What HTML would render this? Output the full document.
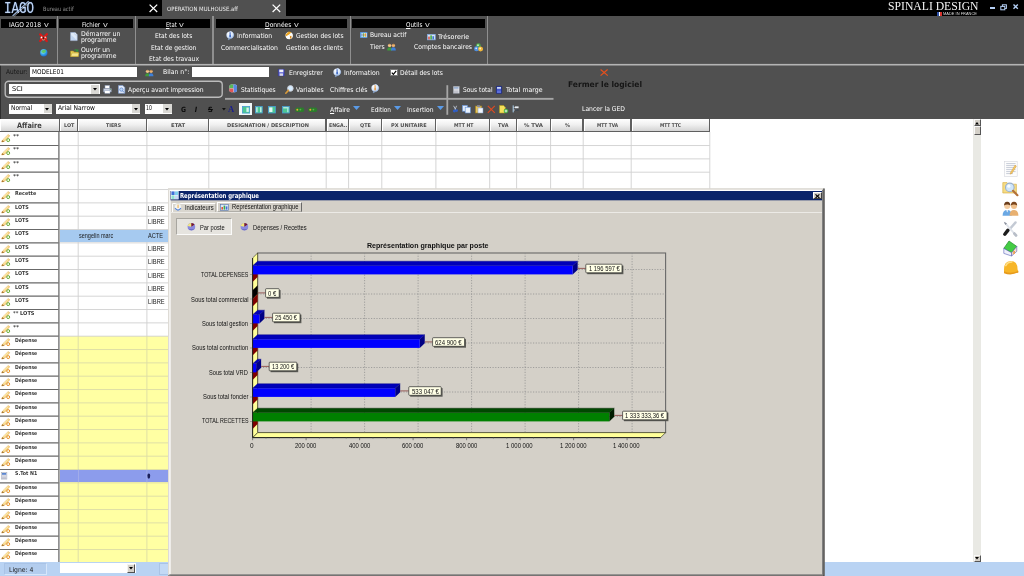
<!DOCTYPE html>
<html lang="fr"><head><meta charset="utf-8"><title>IAGO - OPERATION MULHOUSE.aff</title>
<style>
html,body{margin:0;padding:0;}
body{width:1024px;height:576px;overflow:hidden;background:#fff;position:relative;}
#app{left:0;top:0;width:1024px;height:576px;overflow:hidden;will-change:transform;}
body div,body span.t,body svg{position:absolute;box-sizing:border-box;}
span.t{white-space:nowrap;}
svg{overflow:visible;}
u{text-decoration:underline;}
</style></head>
<body>
<div id="app">
<div style="left:0px;top:0px;width:1024px;height:16px;background:#000;"></div>
<div style="left:0px;top:16px;width:1024px;height:103px;background:#505050;"></div>
<div style="left:0px;top:65.4px;width:1.3px;height:53.4px;background:#2e2e2e;"></div>
<div style="left:162px;top:0px;width:123.5px;height:16.5px;background:#505050;"></div>
<span class="t" style="left:4.20px;top:-2.00px;font:16.2px/22.68px 'Liberation Mono',monospace;color:#c4d6f2;transform-origin:0 50%;transform:scaleX(0.7720);text-shadow:0 0 1.2px #4f83c8;">IAGO</span>
<svg style="left:10px;top:0px;" width="22" height="17" viewBox="0 0 22 17"><path d="M2.6 15.8 L18.6 1.2" stroke="#a9c6ee" stroke-width="1.1" fill="none"/><path d="M4.2 16.2 L19.6 2.2" stroke="#e8f0fb" stroke-width="0.6" fill="none"/></svg>
<span class="t" style="left:43.00px;top:5.00px;font:5.9px/8.26px 'DejaVu Sans Condensed','DejaVu Sans','Liberation Sans',sans-serif;color:#8c8c8c;transform-origin:0 50%;transform:scaleX(0.9574);">Bureau actif</span>
<svg style="left:148.6px;top:3.8px;" width="9" height="9" viewBox="0 0 9 9"><path d="M0.6 0.6 L8.2 8.0 M8.2 0.6 L0.6 8.0" stroke="#fff" stroke-width="1.25" fill="none"/></svg>
<span class="t" style="left:167.00px;top:5.00px;font:5.9px/8.26px 'DejaVu Sans Condensed','DejaVu Sans','Liberation Sans',sans-serif;color:#ececec;transform-origin:0 50%;transform:scaleX(1.0044);">OPERATION MULHOUSE.aff</span>
<svg style="left:271.6px;top:3.8px;" width="9" height="9" viewBox="0 0 9 9"><path d="M0.6 0.6 L8.2 8.0 M8.2 0.6 L0.6 8.0" stroke="#fff" stroke-width="1.25" fill="none"/></svg>
<span class="t" style="left:888.00px;top:-2.00px;font:12.7px/17.78px 'Liberation Serif',serif;color:#f4f4f4;transform-origin:0 50%;transform:scaleX(0.9204);">SPINALI DESIGN</span>
<div style="left:936.8px;top:12px;width:5px;height:3.6px;background:linear-gradient(90deg,#2b4fa8 0 33%,#fff 33% 66%,#d8322c 66% 100%);"></div>
<span class="t" style="left:943.00px;top:11.00px;font:4.4px/6.16px 'Liberation Sans',sans-serif;color:#dcdcdc;transform-origin:0 50%;transform:scaleX(0.9048);">MADE IN FRANCE</span>
<div style="left:990px;top:7.4px;width:5.2px;height:1.8px;background:#b5d0f5;"></div>
<svg style="left:1000px;top:4px;" width="8" height="7" viewBox="0 0 8 7"><rect x="2.4" y="0.8" width="4" height="3.6" fill="none" stroke="#b5d0f5" stroke-width="1"/><rect x="0.8" y="2.4" width="4" height="3.4" fill="#000" stroke="#b5d0f5" stroke-width="1"/></svg>
<svg style="left:1013px;top:4.4px;" width="6" height="6" viewBox="0 0 6 6"><path d="M0.5 0.5 L4.8 4.8 M4.8 0.5 L0.5 4.8" stroke="#b5d0f5" stroke-width="1.4" fill="none"/></svg>
<div style="left:56.7px;top:16px;width:1.4px;height:48.5px;background:#8f8f8f;"></div>
<div style="left:134.7px;top:16px;width:1.4px;height:48.5px;background:#8f8f8f;"></div>
<div style="left:212.4px;top:16px;width:1.4px;height:48.5px;background:#8f8f8f;"></div>
<div style="left:349.8px;top:16px;width:1.4px;height:48.5px;background:#8f8f8f;"></div>
<div style="left:486.7px;top:16px;width:1.4px;height:48.5px;background:#8f8f8f;"></div>
<svg style="left:0px;top:63px;" width="1024" height="3" viewBox="0 0 1024 3"><rect x="0" y="0.9" width="1024" height="1.6" fill="#b4b4b4"/></svg>
<div style="left:1px;top:19px;width:55.2px;height:8.8px;background:#000;"></div>
<span class="t" style="left:9.40px;top:21.00px;font:6.67px/9.34px 'DejaVu Sans Condensed','DejaVu Sans','Liberation Sans',sans-serif;color:#fff;transform-origin:0 50%;transform:scaleX(0.9922);">IAGO 2018</span>
<span class="t" style="left:43.80px;top:20.00px;font:7.4px/10.36px 'Liberation Sans',sans-serif;color:#d4d4d4;transform-origin:0 50%;transform:scaleX(1.2962);">v</span>
<div style="left:59px;top:19px;width:74.2px;height:8.8px;background:#000;"></div>
<span class="t" style="left:82.00px;top:21.00px;font:6.67px/9.34px 'DejaVu Sans Condensed','DejaVu Sans','Liberation Sans',sans-serif;color:#fff;transform-origin:0 50%;transform:scaleX(0.9267);">Fichier</span>
<span class="t" style="left:102.50px;top:20.00px;font:7.4px/10.36px 'Liberation Sans',sans-serif;color:#d4d4d4;transform-origin:0 50%;transform:scaleX(1.2962);">v</span>
<div style="left:137.5px;top:19px;width:72.5px;height:8.8px;background:#000;"></div>
<span class="t" style="left:165.60px;top:21.00px;font:6.67px/9.34px 'DejaVu Sans Condensed','DejaVu Sans','Liberation Sans',sans-serif;color:#fff;transform-origin:0 50%;transform:scaleX(0.8873);"><u>E</u>tat</span>
<span class="t" style="left:178.80px;top:20.00px;font:7.4px/10.36px 'Liberation Sans',sans-serif;color:#d4d4d4;transform-origin:0 50%;transform:scaleX(1.2962);">v</span>
<div style="left:216px;top:19px;width:131.3px;height:8.8px;background:#000;"></div>
<span class="t" style="left:264.70px;top:21.00px;font:6.67px/9.34px 'DejaVu Sans Condensed','DejaVu Sans','Liberation Sans',sans-serif;color:#fff;transform-origin:0 50%;transform:scaleX(1.0009);"><u>D</u>onnées</span>
<span class="t" style="left:293.50px;top:20.00px;font:7.4px/10.36px 'Liberation Sans',sans-serif;color:#d4d4d4;transform-origin:0 50%;transform:scaleX(1.2962);">v</span>
<div style="left:352.2px;top:19px;width:132.6px;height:8.8px;background:#000;"></div>
<span class="t" style="left:406.00px;top:21.00px;font:6.67px/9.34px 'DejaVu Sans Condensed','DejaVu Sans','Liberation Sans',sans-serif;color:#fff;transform-origin:0 50%;transform:scaleX(0.9473);"><u>O</u>utils</span>
<span class="t" style="left:424.80px;top:20.00px;font:7.4px/10.36px 'Liberation Sans',sans-serif;color:#d4d4d4;transform-origin:0 50%;transform:scaleX(1.2962);">v</span>
<svg style="left:39.4px;top:33.3px;" width="9" height="9.4" viewBox="0 0 9 9.4"><path d="M1.2 1.4 L7.8 8 M7.8 1.2 L1.2 8" stroke="#d81a18" stroke-width="2.3" stroke-linecap="round"/><path d="M1 5 H8" stroke="#e83028" stroke-width="2"/><circle cx="2.6" cy="4.4" r="0.9" fill="#fff"/><circle cx="6.2" cy="4.3" r="0.8" fill="#f4e0d8"/><circle cx="4.4" cy="5" r="0.9" fill="#3a1410"/><path d="M3 6.6 Q4.4 7.6 5.8 6.6" stroke="#f0b090" stroke-width="0.7" fill="none"/></svg>
<svg style="left:39.6px;top:48.6px;" width="7.6" height="7.6" viewBox="0 0 7.6 7.6"><defs><radialGradient id="gl" cx="0.4" cy="0.35" r="0.75"><stop offset="0" stop-color="#a8f0e8"/><stop offset="0.55" stop-color="#30a0e8"/><stop offset="1" stop-color="#1a58c0"/></radialGradient></defs><circle cx="3.8" cy="3.8" r="3.7" fill="url(#gl)"/><path d="M1.6 2 Q3.8 -0.2 6 1.6 Q6.2 3 4.8 3.4 Q3.4 4.4 2.2 3.6 Q1.2 3 1.6 2Z" fill="#58c860" opacity="0.9"/></svg>
<svg style="left:69.8px;top:31.6px;" width="8" height="9" viewBox="0 0 8 9"><path d="M0.6 0.5 H5 L7.2 2.8 V8.6 H0.6Z" fill="#dfeaf8" stroke="#9fb6d8" stroke-width="0.6"/><path d="M5 0.5 V2.8 H7.2" fill="#fff" stroke="#9fb6d8" stroke-width="0.5"/><path d="M1.2 3 L6.6 8 H1.2Z" fill="#b9cfef" opacity="0.8"/></svg>
<svg style="left:69.6px;top:47.8px;" width="9.2" height="9" viewBox="0 0 9.2 9"><path d="M0.5 3 H3.4 L4.2 4 H8.4 V8.5 H0.5Z" fill="#e9cf55" stroke="#a88a20" stroke-width="0.6"/><path d="M0.8 8.4 L2 5 H8.9 L8.2 8.4Z" fill="#f6e58a" stroke="#b39a2c" stroke-width="0.5"/><path d="M3.4 2.8 Q5 0.2 7.6 1.8 L8.2 0.8 L8.4 3.8 L5.6 3.4 L6.6 2.6 Q5.2 1.6 3.4 2.8Z" fill="#2f9a3a"/></svg>
<span class="t" style="left:80.60px;top:30.00px;font:6.67px/9.34px 'DejaVu Sans Condensed','DejaVu Sans','Liberation Sans',sans-serif;color:#fff;transform-origin:0 50%;transform:scaleX(1.0365);">Démarrer un</span>
<span class="t" style="left:80.60px;top:36.00px;font:6.67px/9.34px 'DejaVu Sans Condensed','DejaVu Sans','Liberation Sans',sans-serif;color:#fff;transform-origin:0 50%;transform:scaleX(1.0120);">programme</span>
<span class="t" style="left:81.00px;top:46.00px;font:6.67px/9.34px 'DejaVu Sans Condensed','DejaVu Sans','Liberation Sans',sans-serif;color:#fff;transform-origin:0 50%;transform:scaleX(1.0305);">Ouvrir un</span>
<span class="t" style="left:81.00px;top:52.00px;font:6.67px/9.34px 'DejaVu Sans Condensed','DejaVu Sans','Liberation Sans',sans-serif;color:#fff;transform-origin:0 50%;transform:scaleX(1.0120);">programme</span>
<span class="t" style="left:155.00px;top:32.00px;font:6.67px/9.34px 'DejaVu Sans Condensed','DejaVu Sans','Liberation Sans',sans-serif;color:#fff;transform-origin:0 50%;transform:scaleX(0.9984);">Etat des lots</span>
<span class="t" style="left:151.00px;top:44.00px;font:6.67px/9.34px 'DejaVu Sans Condensed','DejaVu Sans','Liberation Sans',sans-serif;color:#fff;transform-origin:0 50%;transform:scaleX(0.9953);">Etat de gestion</span>
<span class="t" style="left:149.00px;top:55.00px;font:6.67px/9.34px 'DejaVu Sans Condensed','DejaVu Sans','Liberation Sans',sans-serif;color:#fff;transform-origin:0 50%;transform:scaleX(1.0082);">Etat des travaux</span>
<svg style="left:226px;top:31px;" width="8.0" height="9.0" viewBox="0 0 8 9"><defs><radialGradient id="ig1" cx="0.4" cy="0.3" r="0.8"><stop offset="0" stop-color="#ffffff"/><stop offset="0.6" stop-color="#d7e6fa"/><stop offset="1" stop-color="#8fb0e0"/></radialGradient></defs><path d="M4 0.3 A3.7 3.7 0 1 1 2.4 7.3 L2.2 8.9 L4.6 7.6Z" fill="url(#ig1)" stroke="#7f9fd0" stroke-width="0.4"/><circle cx="4" cy="4" r="3.6" fill="url(#ig1)"/><rect x="3.4" y="3.3" width="1.4" height="3" fill="#1f4fb8"/><rect x="3.4" y="1.5" width="1.4" height="1.2" fill="#1f4fb8"/></svg>
<span class="t" style="left:237.00px;top:32.00px;font:6.67px/9.34px 'DejaVu Sans Condensed','DejaVu Sans','Liberation Sans',sans-serif;color:#fff;transform-origin:0 50%;transform:scaleX(1.0157);">Information</span>
<svg style="left:285px;top:31.2px;" width="8.4" height="8.4" viewBox="0 0 8.4 8.4"><circle cx="4.2" cy="4.6" r="3.7" fill="#fbfaf6"/><path d="M0.3 4 L3.6 0.6 L6.4 1.2 L4.2 3.6 L1.6 5.2Z" fill="#e8a424"/><path d="M4.2 3.4 L7.6 5.2 L7.2 6 L4.2 4.4Z" fill="#f4f0e4"/><rect x="5" y="5" width="1.4" height="2.6" fill="#d88a20"/><path d="M1.2 5.4 L4 3.8 V7.8 Q2 7.6 1.2 6.4Z" fill="#fff"/></svg>
<span class="t" style="left:296.00px;top:32.00px;font:6.67px/9.34px 'DejaVu Sans Condensed','DejaVu Sans','Liberation Sans',sans-serif;color:#fff;transform-origin:0 50%;transform:scaleX(0.9870);">Gestion des lots</span>
<span class="t" style="left:221.00px;top:44.00px;font:6.67px/9.34px 'DejaVu Sans Condensed','DejaVu Sans','Liberation Sans',sans-serif;color:#fff;transform-origin:0 50%;transform:scaleX(1.0227);">Commercialisation</span>
<span class="t" style="left:286.00px;top:44.00px;font:6.67px/9.34px 'DejaVu Sans Condensed','DejaVu Sans','Liberation Sans',sans-serif;color:#fff;transform-origin:0 50%;transform:scaleX(0.9981);">Gestion des clients</span>
<svg style="left:359.7px;top:31.8px;" width="7.4" height="6" viewBox="0 0 7.4 6"><rect x="0.35" y="0.35" width="6.7" height="5.3" fill="#f4f8fd" stroke="#3f8ae0" stroke-width="0.7"/><rect x="1.3" y="1.2" width="1.2" height="3.6" fill="#3fa0e8"/><rect x="3.1" y="1.2" width="1.2" height="3.6" fill="#58b048"/><rect x="4.9" y="1.2" width="1.2" height="3.6" fill="#e8b038"/><rect x="1.3" y="2.6" width="4.8" height="0.7" fill="#e05a48" opacity=".7"/></svg>
<span class="t" style="left:369.70px;top:31.00px;font:6.67px/9.34px 'DejaVu Sans Condensed','DejaVu Sans','Liberation Sans',sans-serif;color:#fff;transform-origin:0 50%;transform:scaleX(0.9984);">Bureau actif</span>
<svg style="left:427.2px;top:33.6px;" width="8.6" height="6.2" viewBox="0 0 8.6 6.2"><rect x="0.35" y="0.35" width="7.9" height="5.5" fill="#d8e4f4" stroke="#7fa8e0" stroke-width="0.7"/><rect x="1.2" y="2.6" width="1.6" height="2.8" fill="#e05848"/><rect x="3.3" y="1.4" width="1.6" height="4" fill="#48a848"/><rect x="5.4" y="2.2" width="1.6" height="3.2" fill="#3f78d0"/></svg>
<span class="t" style="left:437.70px;top:33.00px;font:6.67px/9.34px 'DejaVu Sans Condensed','DejaVu Sans','Liberation Sans',sans-serif;color:#fff;transform-origin:0 50%;transform:scaleX(1.0689);">Trésorerie</span>
<span class="t" style="left:369.70px;top:43.00px;font:6.67px/9.34px 'DejaVu Sans Condensed','DejaVu Sans','Liberation Sans',sans-serif;color:#fff;transform-origin:0 50%;transform:scaleX(1.0145);">Tiers</span>
<svg style="left:387.2px;top:43px;" width="9" height="7.8" viewBox="0 0 9 7.8"><circle cx="2.6" cy="2.4" r="1.7" fill="#f2c48a"/><path d="M0.2 7.6 Q0.2 4.3 2.6 4.3 Q5 4.3 5 7.6Z" fill="#3f9a3a"/><circle cx="6.4" cy="2.4" r="1.7" fill="#e9b070"/><path d="M4 7.6 Q4 4.3 6.4 4.3 Q8.8 4.3 8.8 7.6Z" fill="#3f7fd8"/><path d="M1.2 1.6 Q2.6 -0.2 4 1.6 Q2.6 1 1.2 1.6Z" fill="#7a4a1a"/><path d="M5 1.6 Q6.4 -0.2 7.8 1.6 Q6.4 1 5 1.6Z" fill="#7a4a1a"/></svg>
<span class="t" style="left:413.50px;top:43.00px;font:6.67px/9.34px 'DejaVu Sans Condensed','DejaVu Sans','Liberation Sans',sans-serif;color:#fff;transform-origin:0 50%;transform:scaleX(1.0076);">Comptes bancaires</span>
<svg style="left:474px;top:42.5px;" width="9.2" height="8.8" viewBox="0 0 9.2 8.8"><circle cx="4.4" cy="2.6" r="2.4" fill="#4aa84a"/><circle cx="2.6" cy="5.8" r="2.5" fill="#4f8fe0"/><circle cx="6.6" cy="6" r="2.5" fill="#efb63a"/><circle cx="4.0" cy="2.2" r="0.9" fill="#c9f0c0"/><circle cx="2.2" cy="5.3" r="0.9" fill="#d6e8ff"/><circle cx="6.2" cy="5.5" r="0.9" fill="#fff0c0"/></svg>
<span class="t" style="left:5.50px;top:68.00px;font:6.67px/9.34px 'DejaVu Sans Condensed','DejaVu Sans','Liberation Sans',sans-serif;color:#161616;transform-origin:0 50%;transform:scaleX(0.9731);">Auteur:</span>
<div style="left:30px;top:66.8px;width:107px;height:10.7px;background:#fff;"></div>
<span class="t" style="left:32.00px;top:68.00px;font:6.67px/9.34px 'DejaVu Sans Condensed','DejaVu Sans','Liberation Sans',sans-serif;color:#000;transform-origin:0 50%;transform:scaleX(0.9632);">MODELE01</span>
<svg style="left:145.4px;top:69.4px;" width="8.6" height="7.6" viewBox="0 0 9 7.8"><circle cx="2.6" cy="2.4" r="1.7" fill="#f2c48a"/><path d="M0.2 7.6 Q0.2 4.3 2.6 4.3 Q5 4.3 5 7.6Z" fill="#3f9a3a"/><circle cx="6.4" cy="2.4" r="1.7" fill="#e9b070"/><path d="M4 7.6 Q4 4.3 6.4 4.3 Q8.8 4.3 8.8 7.6Z" fill="#3f7fd8"/><path d="M1.2 1.6 Q2.6 -0.2 4 1.6 Q2.6 1 1.2 1.6Z" fill="#7a4a1a"/><path d="M5 1.6 Q6.4 -0.2 7.8 1.6 Q6.4 1 5 1.6Z" fill="#7a4a1a"/></svg>
<span class="t" style="left:163.00px;top:68.00px;font:6.67px/9.34px 'DejaVu Sans Condensed','DejaVu Sans','Liberation Sans',sans-serif;color:#fff;transform-origin:0 50%;transform:scaleX(1.0263);">Bilan n°:</span>
<div style="left:192px;top:66.8px;width:77.3px;height:10.7px;background:#fff;"></div>
<svg style="left:278.4px;top:69.2px;" width="6.6" height="7.2" viewBox="0 0 6.6 7.2"><rect x="0.3" y="0.3" width="6" height="6.6" rx="0.5" fill="#5a5fd0" stroke="#2a2f90" stroke-width="0.5"/><rect x="1.3" y="0.6" width="4" height="2.6" fill="#f2f2f8"/><rect x="1.6" y="4.4" width="3.4" height="2.4" fill="#d8d8e8"/></svg>
<span class="t" style="left:288.50px;top:69.00px;font:6.67px/9.34px 'DejaVu Sans Condensed','DejaVu Sans','Liberation Sans',sans-serif;color:#fff;transform-origin:0 50%;transform:scaleX(1.0247);">Enregistrer</span>
<svg style="left:333.4px;top:68.2px;" width="8.0" height="9.0" viewBox="0 0 8 9"><defs><radialGradient id="ig2" cx="0.4" cy="0.3" r="0.8"><stop offset="0" stop-color="#ffffff"/><stop offset="0.6" stop-color="#d7e6fa"/><stop offset="1" stop-color="#8fb0e0"/></radialGradient></defs><path d="M4 0.3 A3.7 3.7 0 1 1 2.4 7.3 L2.2 8.9 L4.6 7.6Z" fill="url(#ig2)" stroke="#7f9fd0" stroke-width="0.4"/><circle cx="4" cy="4" r="3.6" fill="url(#ig2)"/><rect x="3.4" y="3.3" width="1.4" height="3" fill="#1f4fb8"/><rect x="3.4" y="1.5" width="1.4" height="1.2" fill="#1f4fb8"/></svg>
<span class="t" style="left:343.50px;top:69.00px;font:6.67px/9.34px 'DejaVu Sans Condensed','DejaVu Sans','Liberation Sans',sans-serif;color:#fff;transform-origin:0 50%;transform:scaleX(1.0272);">Information</span>
<div style="left:390.4px;top:69.3px;width:7.3px;height:7px;background:#fff;border:0.7px solid #777;"></div>
<svg style="left:391.4px;top:70.2px;" width="6" height="5.6" viewBox="0 0 6 5.6"><path d="M0.8 2.6 L2.4 4.4 L5.2 0.8" stroke="#000" stroke-width="1.2" fill="none"/></svg>
<span class="t" style="left:400.20px;top:69.00px;font:6.67px/9.34px 'DejaVu Sans Condensed','DejaVu Sans','Liberation Sans',sans-serif;color:#fff;transform-origin:0 50%;transform:scaleX(0.9986);">Détail des lots</span>
<svg style="left:0px;top:78px;" width="230" height="22" viewBox="0 0 230 22"><rect x="5.2" y="3.2" width="217" height="16" rx="3.4" fill="none" stroke="#bcbcbc" stroke-width="1.35"/></svg>
<div style="left:9.4px;top:84.2px;width:90.2px;height:10.1px;background:#fff;"></div>
<div style="left:91.2px;top:84.7px;width:8.2px;height:9.1px;background:#d9d8d4;"></div>
<svg style="left:92.9px;top:88.05px;" width="4" height="2.6" viewBox="0 0 4 2.6"><path d="M0 0 H4 L2 2.4Z" fill="#000"/></svg>
<span class="t" style="left:11.80px;top:85.00px;font:6.67px/9.34px 'DejaVu Sans Condensed','DejaVu Sans','Liberation Sans',sans-serif;color:#000;transform-origin:0 50%;transform:scaleX(1.1059);">SCI</span>
<svg style="left:103px;top:85px;" width="9" height="8.8" viewBox="0 0 9 8.8"><rect x="2" y="0.4" width="4.6" height="3.4" fill="#fff" stroke="#8a9ab8" stroke-width="0.5"/><path d="M0.4 3.6 H8.4 V7 H0.4Z" fill="#cfd6e4" stroke="#77839c" stroke-width="0.5"/><rect x="1.8" y="5.8" width="5.2" height="2.6" fill="#fff" stroke="#8a9ab8" stroke-width="0.4"/><circle cx="7.2" cy="4.6" r="0.5" fill="#3a8a3a"/></svg>
<svg style="left:117.8px;top:85px;" width="7.4" height="8.8" viewBox="0 0 7.4 8.8"><path d="M0.5 0.5 H4.8 L6.8 2.6 V8.3 H0.5Z" fill="#e6eefb" stroke="#7f9fd8" stroke-width="0.6"/><circle cx="3.4" cy="4.6" r="1.7" fill="#bcd6f8" stroke="#3f6fc0" stroke-width="0.6"/><path d="M4.6 5.8 L6 7.4" stroke="#3f6fc0" stroke-width="0.8"/></svg>
<span class="t" style="left:128.20px;top:86.00px;font:6.67px/9.34px 'DejaVu Sans Condensed','DejaVu Sans','Liberation Sans',sans-serif;color:#fff;transform-origin:0 50%;transform:scaleX(1.0150);">Aperçu avant impression</span>
<svg style="left:229.4px;top:84.4px;" width="8.4" height="8.8" viewBox="0 0 8.4 8.8"><rect x="0.4" y="0.6" width="7.6" height="7.6" rx="2" fill="#e8e8f0"/><path d="M0.4 4.2 V2.6 Q0.4 0.6 2.4 0.6 H4.4 V4.2Z" fill="#58b858"/><path d="M4.4 0.6 H6 Q8 0.6 8 2.6 V6.2 Q8 8.2 6 8.2 H4.8 V4.6 H4.4Z" fill="#5888e0"/><path d="M0.4 4.6 H4.4 V8.2 H2.4 Q0.4 8.2 0.4 6.2Z" fill="#e05858"/></svg>
<span class="t" style="left:240.60px;top:86.00px;font:6.67px/9.34px 'DejaVu Sans Condensed','DejaVu Sans','Liberation Sans',sans-serif;color:#fff;transform-origin:0 50%;transform:scaleX(0.9781);">Statistiques</span>
<svg style="left:284.6px;top:84.8px;" width="9" height="9" viewBox="0 0 9 9"><circle cx="5.4" cy="3.4" r="2.8" fill="#d6ecff" stroke="#c9cdd6" stroke-width="0.9"/><path d="M3.4 5.4 L0.8 8.2" stroke="#d89a3a" stroke-width="1.6" stroke-linecap="round"/></svg>
<span class="t" style="left:296.00px;top:86.00px;font:6.67px/9.34px 'DejaVu Sans Condensed','DejaVu Sans','Liberation Sans',sans-serif;color:#fff;transform-origin:0 50%;transform:scaleX(1.0099);">Variables</span>
<span class="t" style="left:330.20px;top:86.00px;font:6.67px/9.34px 'DejaVu Sans Condensed','DejaVu Sans','Liberation Sans',sans-serif;color:#fff;transform-origin:0 50%;transform:scaleX(1.0256);">Chiffres clés</span>
<svg style="left:370.5px;top:84.4px;" width="8" height="9" viewBox="0 0 8 9"><defs><radialGradient id="ig3" cx="0.4" cy="0.3" r="0.8"><stop offset="0" stop-color="#ffffff"/><stop offset="0.6" stop-color="#d7e6fa"/><stop offset="1" stop-color="#8fb0e0"/></radialGradient></defs><path d="M4 0.3 A3.7 3.7 0 1 1 2.4 7.3 L2.2 8.9 L4.6 7.6Z" fill="url(#ig3)" stroke="#7f9fd0" stroke-width="0.4"/><circle cx="4" cy="4" r="3.6" fill="url(#ig3)"/><rect x="3.4" y="3.3" width="1.4" height="3" fill="#e8902c"/><rect x="3.4" y="1.5" width="1.4" height="1.2" fill="#e8902c"/></svg>
<svg style="left:0px;top:80px;" width="600" height="40" viewBox="0 0 600 40"><rect x="225" y="17.9" width="328.5" height="1.9" fill="#a6a6a6"/><rect x="446.4" y="5.2" width="1.8" height="29.6" fill="#a6a6a6"/></svg>
<svg style="left:452.6px;top:85.6px;" width="6.6" height="7.6" viewBox="0 0 6.6 7.6"><rect x="0.3" y="0.3" width="6" height="7" fill="#eef0f4" stroke="#8a8f9c" stroke-width="0.5"/><rect x="1" y="1" width="4.6" height="1.8" fill="#9ab0d0"/><path d="M1 4 H5.6 M1 5.4 H5.6 M1 6.6 H5.6" stroke="#9a9aa8" stroke-width="0.6"/></svg>
<span class="t" style="left:462.70px;top:86.00px;font:6.67px/9.34px 'DejaVu Sans Condensed','DejaVu Sans','Liberation Sans',sans-serif;color:#fff;transform-origin:0 50%;transform:scaleX(0.9872);">Sous total</span>
<svg style="left:496.4px;top:85.6px;" width="6" height="7.8" viewBox="0 0 6 7.8"><rect x="0.3" y="0.3" width="5.4" height="7.2" rx="0.6" fill="#2b3fc0" stroke="#16206a" stroke-width="0.5"/><rect x="1" y="1" width="4" height="1.8" fill="#c9d6f8"/><path d="M1 4 H5 M1 5.4 H5 M1 6.6 H5" stroke="#8a9af0" stroke-width="0.6"/></svg>
<span class="t" style="left:506.00px;top:86.00px;font:6.67px/9.34px 'DejaVu Sans Condensed','DejaVu Sans','Liberation Sans',sans-serif;color:#fff;transform-origin:0 50%;transform:scaleX(1.0396);">Total marge</span>
<svg style="left:600px;top:69.4px;" width="8.4" height="7" viewBox="0 0 8.4 7"><path d="M0.6 0.5 L7.8 6.6 M7.6 0.5 L0.6 6.6" stroke="#e8501c" stroke-width="1.15" fill="none"/></svg>
<span class="t" style="left:567.50px;top:79.00px;font:bold 7.9px/11.06px 'DejaVu Sans Condensed','DejaVu Sans','Liberation Sans',sans-serif;color:#161616;transform-origin:0 50%;transform:scaleX(1.0652);">Fermer le logiciel</span>
<span class="t" style="left:582.00px;top:105.00px;font:6.67px/9.34px 'DejaVu Sans Condensed','DejaVu Sans','Liberation Sans',sans-serif;color:#fff;transform-origin:0 50%;transform:scaleX(1.0136);">Lancer la GED</span>
<div style="left:9.4px;top:103.9px;width:42.7px;height:10px;background:#fff;"></div>
<div style="left:43.7px;top:104.4px;width:8.2px;height:9px;background:#d9d8d4;"></div>
<svg style="left:45.4px;top:107.7px;" width="4" height="2.6" viewBox="0 0 4 2.6"><path d="M0 0 H4 L2 2.4Z" fill="#000"/></svg>
<span class="t" style="left:11.30px;top:104.00px;font:6.67px/9.34px 'DejaVu Sans Condensed','DejaVu Sans','Liberation Sans',sans-serif;color:#000;transform-origin:0 50%;transform:scaleX(0.9789);">Normal</span>
<div style="left:56.2px;top:103.9px;width:84px;height:10px;background:#fff;"></div>
<div style="left:131.79999999999998px;top:104.4px;width:8.2px;height:9px;background:#d9d8d4;"></div>
<svg style="left:133.5px;top:107.7px;" width="4" height="2.6" viewBox="0 0 4 2.6"><path d="M0 0 H4 L2 2.4Z" fill="#000"/></svg>
<span class="t" style="left:58.00px;top:104.00px;font:6.67px/9.34px 'DejaVu Sans Condensed','DejaVu Sans','Liberation Sans',sans-serif;color:#000;transform-origin:0 50%;transform:scaleX(1.0047);">Arial Narrow</span>
<div style="left:145px;top:103.9px;width:27.2px;height:10px;background:#fff;"></div>
<div style="left:162.79999999999998px;top:104.4px;width:9.2px;height:9px;background:#d9d8d4;"></div>
<svg style="left:165.0px;top:107.7px;" width="4" height="2.6" viewBox="0 0 4 2.6"><path d="M0 0 H4 L2 2.4Z" fill="#000"/></svg>
<span class="t" style="left:146.30px;top:104.00px;font:6.67px/9.34px 'DejaVu Sans Condensed','DejaVu Sans','Liberation Sans',sans-serif;color:#000;transform-origin:0 50%;transform:scaleX(0.7607);">10</span>
<span class="t" style="left:180.50px;top:105.00px;font:bold 7.2px/10.08px 'DejaVu Sans Condensed','DejaVu Sans','Liberation Sans',sans-serif;color:#0a0a0a;transform-origin:0 50%;transform:scaleX(0.9412);">G</span>
<span class="t" style="left:194.80px;top:105.00px;font:italic bold 7.2px/10.08px 'DejaVu Sans Condensed','DejaVu Sans','Liberation Sans',sans-serif;color:#0a0a0a;">I</span>
<span class="t" style="left:207.50px;top:105.00px;font:bold 7.2px/10.08px 'DejaVu Sans Condensed','DejaVu Sans','Liberation Sans',sans-serif;color:#0a0a0a;transform-origin:0 50%;transform:scaleX(1.0274);text-decoration:line-through;">S</span>
<svg style="left:222.4px;top:108px;" width="4" height="3" viewBox="0 0 4 3"><path d="M0 0 H3.8 L1.9 2.6Z" fill="#111"/></svg>
<span class="t" style="left:228.30px;top:103.00px;font:bold 8.8px/12.32px 'Liberation Serif',serif;color:#1a1f8c;transform-origin:0 50%;transform:scaleX(0.9749);">A</span>
<div style="left:239px;top:103px;width:13.4px;height:11.8px;background:#f2f8f8;"></div>
<svg style="left:242.4px;top:106px;" width="8" height="7.5" viewBox="0 0 8 7.5"><rect x="0.4" y="0.4" width="7.2" height="6.7" fill="#4cc894" stroke="#4a9ad4" stroke-width="0.8"/><rect x="4.4" y="1.6" width="2.4" height="4.3" fill="#d8f4f0"/></svg>
<svg style="left:255.3px;top:105.9px;" width="7.7" height="7.4" viewBox="0 0 7.7 7.4"><rect x="0.4" y="0.4" width="6.9" height="6.6000000000000005" fill="#4cc894" stroke="#4a9ad4" stroke-width="0.8"/><rect x="1.2" y="1.2" width="1.4" height="5.0" fill="#c8f0ec"/><rect x="5.1" y="1.2" width="1.4" height="5.0" fill="#c8f0ec"/></svg>
<svg style="left:268.4px;top:105.9px;" width="7.8" height="7.4" viewBox="0 0 7.8 7.4"><rect x="0.4" y="0.4" width="7.0" height="6.6000000000000005" fill="#4cc894" stroke="#4a9ad4" stroke-width="0.8"/><rect x="1.2" y="1.4" width="3.276" height="4.6000000000000005" fill="#e4f8f6"/></svg>
<svg style="left:282px;top:105.9px;" width="7.7" height="7.4" viewBox="0 0 7.7 7.4"><rect x="0.4" y="0.4" width="6.9" height="6.6000000000000005" fill="#4cc894" stroke="#4a9ad4" stroke-width="0.8"/><rect x="1.2" y="1.2" width="5.300000000000001" height="1.2" fill="#c8f0ec"/><rect x="5.1" y="1.2" width="1.4" height="5.0" fill="#a8e4e0"/></svg>
<svg style="left:294.8px;top:107.3px;" width="9.5" height="5.2" viewBox="0 0 9.5 5.2"><rect x="0.3" y="0.5" width="8.9" height="4.4" rx="1.6" fill="#2c7c2c"/><circle cx="2.3" cy="2.7" r="1" fill="#e8a838"/><circle cx="5.4" cy="2.6" r="0.9" fill="#58b848"/></svg>
<svg style="left:308px;top:107.3px;" width="9.5" height="5.2" viewBox="0 0 9.5 5.2"><rect x="0.3" y="0.5" width="8.9" height="4.4" rx="1.6" fill="#2c7c2c"/><circle cx="2.3" cy="2.7" r="1" fill="#e8a838"/><circle cx="5.4" cy="2.6" r="0.9" fill="#58b848"/></svg>
<span class="t" style="left:329.70px;top:106.00px;font:6.67px/9.34px 'DejaVu Sans Condensed','DejaVu Sans','Liberation Sans',sans-serif;color:#fff;transform-origin:0 50%;transform:scaleX(1.0215);"><u>A</u>ffaire</span>
<svg style="left:353px;top:106.2px;" width="7" height="4.2" viewBox="0 0 7 4.2"><path d="M0 0 H7 L3.5 4Z" fill="#5a9be8"/></svg>
<span class="t" style="left:371.00px;top:106.00px;font:6.67px/9.34px 'DejaVu Sans Condensed','DejaVu Sans','Liberation Sans',sans-serif;color:#fff;transform-origin:0 50%;transform:scaleX(0.9646);">Edition</span>
<svg style="left:394.3px;top:106.2px;" width="7" height="4.2" viewBox="0 0 7 4.2"><path d="M0 0 H7 L3.5 4Z" fill="#5a9be8"/></svg>
<span class="t" style="left:406.50px;top:106.00px;font:6.67px/9.34px 'DejaVu Sans Condensed','DejaVu Sans','Liberation Sans',sans-serif;color:#fff;transform-origin:0 50%;transform:scaleX(1.0077);">Insertion</span>
<svg style="left:436.5px;top:106.2px;" width="7" height="4.2" viewBox="0 0 7 4.2"><path d="M0 0 H7 L3.5 4Z" fill="#5a9be8"/></svg>
<svg style="left:452.2px;top:105px;" width="6.6" height="8.4" viewBox="0 0 6.6 8.4"><path d="M1.6 0.8 L3.6 4.6 M4.6 0.8 L3 4.6" stroke="#c8d0e0" stroke-width="0.8"/><circle cx="2.4" cy="6" r="1.5" fill="#2f5fc8"/><circle cx="4.6" cy="5.6" r="1.4" fill="#2f5fc8"/></svg>
<svg style="left:462.2px;top:105px;" width="9" height="8.4" viewBox="0 0 9 8.4"><rect x="0.4" y="0.4" width="5" height="5.8" fill="#dfeaf8" stroke="#5f8fd8" stroke-width="0.6"/><rect x="3.2" y="2.2" width="5.2" height="5.8" fill="#eaf2fc" stroke="#5f8fd8" stroke-width="0.6"/></svg>
<svg style="left:475.4px;top:105px;" width="8.4" height="8.4" viewBox="0 0 8.4 8.4"><rect x="0.4" y="1" width="6.4" height="7" fill="#e6c45a" stroke="#9a7a1a" stroke-width="0.6"/><rect x="2" y="0.2" width="3.2" height="1.8" fill="#8a8a9a"/><rect x="3" y="3" width="5" height="5" fill="#f2f6fc" stroke="#7f9fd0" stroke-width="0.5"/></svg>
<svg style="left:487.2px;top:105px;" width="8.6" height="8.4" viewBox="0 0 8.6 8.4"><path d="M0.8 0.8 L7.8 7.8 M7.8 0.8 L0.8 7.8" stroke="#e04a20" stroke-width="1.15" fill="none"/></svg>
<svg style="left:499px;top:105px;" width="9.6" height="8.4" viewBox="0 0 9.6 8.4"><path d="M0.5 0.5 H4.6 L6.2 2.2 V8 H0.5Z" fill="#f4e05a" stroke="#b09a1a" stroke-width="0.6"/><circle cx="7" cy="6" r="2.3" fill="#3fa83f"/><path d="M7 4.6 V7.4 M5.6 6 H8.4" stroke="#fff" stroke-width="0.8"/></svg>
<svg style="left:512px;top:105.4px;" width="7" height="8" viewBox="0 0 7 8"><path d="M1.2 0.4 V7.4" stroke="#a8d0f0" stroke-width="1"/><path d="M1.2 2.4 H5 M1.2 5 H5" stroke="#c8d0d8" stroke-width="0.7"/><rect x="3" y="1.4" width="3.6" height="1.8" fill="#e8eef4"/><rect x="3" y="4.2" width="3.6" height="1.8" fill="#404850"/></svg>
<div style="left:0px;top:119px;width:1024px;height:443.4px;background:#fff;"></div>
<div style="left:59.5px;top:335.99666666666667px;width:120px;height:226.4033333333333px;background:#ffffa3;"></div>
<svg style="left:0;top:0" width="1024" height="576" viewBox="0 0 1024 576"><path d="M59.5 145.53 H709.8" stroke="#d0d0d0" stroke-width="0.9"/><path d="M59.5 158.87 H709.8" stroke="#d0d0d0" stroke-width="0.9"/><path d="M59.5 172.20 H709.8" stroke="#d0d0d0" stroke-width="0.9"/><path d="M59.5 189.53 H709.8" stroke="#d0d0d0" stroke-width="0.9"/><path d="M59.5 202.86 H172" stroke="#d0d0d0" stroke-width="0.9"/><path d="M59.5 216.20 H172" stroke="#d0d0d0" stroke-width="0.9"/><path d="M59.5 229.53 H172" stroke="#d0d0d0" stroke-width="0.9"/><path d="M59.5 242.86 H172" stroke="#d0d0d0" stroke-width="0.9"/><path d="M59.5 256.20 H172" stroke="#d0d0d0" stroke-width="0.9"/><path d="M59.5 269.53 H172" stroke="#d0d0d0" stroke-width="0.9"/><path d="M59.5 282.86 H172" stroke="#d0d0d0" stroke-width="0.9"/><path d="M59.5 296.20 H172" stroke="#d0d0d0" stroke-width="0.9"/><path d="M59.5 309.53 H172" stroke="#d0d0d0" stroke-width="0.9"/><path d="M59.5 322.86 H172" stroke="#d0d0d0" stroke-width="0.9"/><path d="M59.5 336.20 H172" stroke="#d0d0d0" stroke-width="0.9"/><path d="M59.5 349.53 H172" stroke="#dcdca6" stroke-width="0.9"/><path d="M59.5 362.86 H172" stroke="#dcdca6" stroke-width="0.9"/><path d="M59.5 376.20 H172" stroke="#dcdca6" stroke-width="0.9"/><path d="M59.5 389.53 H172" stroke="#dcdca6" stroke-width="0.9"/><path d="M59.5 402.86 H172" stroke="#dcdca6" stroke-width="0.9"/><path d="M59.5 416.20 H172" stroke="#dcdca6" stroke-width="0.9"/><path d="M59.5 429.53 H172" stroke="#dcdca6" stroke-width="0.9"/><path d="M59.5 442.86 H172" stroke="#dcdca6" stroke-width="0.9"/><path d="M59.5 456.20 H172" stroke="#dcdca6" stroke-width="0.9"/><path d="M59.5 469.53 H172" stroke="#dcdca6" stroke-width="0.9"/><path d="M59.5 482.86 H172" stroke="#dcdca6" stroke-width="0.9"/><path d="M59.5 496.20 H172" stroke="#dcdca6" stroke-width="0.9"/><path d="M59.5 509.53 H172" stroke="#dcdca6" stroke-width="0.9"/><path d="M59.5 522.86 H172" stroke="#dcdca6" stroke-width="0.9"/><path d="M59.5 536.20 H172" stroke="#dcdca6" stroke-width="0.9"/><path d="M59.5 549.53 H172" stroke="#dcdca6" stroke-width="0.9"/><path d="M59.5 562.86 H172" stroke="#dcdca6" stroke-width="0.9"/><path d="M78.20 132 V190" stroke="#d0d0d0" stroke-width="0.9"/><path d="M78.20 190 V335.99666666666667" stroke="#d0d0d0" stroke-width="0.9"/><path d="M78.20 335.99666666666667 V562.4" stroke="#dcdca6" stroke-width="0.9"/><path d="M146.90 132 V190" stroke="#d0d0d0" stroke-width="0.9"/><path d="M146.90 190 V335.99666666666667" stroke="#d0d0d0" stroke-width="0.9"/><path d="M146.90 335.99666666666667 V562.4" stroke="#dcdca6" stroke-width="0.9"/><path d="M208.80 132 V190" stroke="#d0d0d0" stroke-width="0.9"/><path d="M326.20 132 V190" stroke="#d0d0d0" stroke-width="0.9"/><path d="M348.60 132 V190" stroke="#d0d0d0" stroke-width="0.9"/><path d="M381.80 132 V190" stroke="#d0d0d0" stroke-width="0.9"/><path d="M435.90 132 V190" stroke="#d0d0d0" stroke-width="0.9"/><path d="M489.70 132 V190" stroke="#d0d0d0" stroke-width="0.9"/><path d="M516.60 132 V190" stroke="#d0d0d0" stroke-width="0.9"/><path d="M550.60 132 V190" stroke="#d0d0d0" stroke-width="0.9"/><path d="M583.20 132 V190" stroke="#d0d0d0" stroke-width="0.9"/><path d="M631.20 132 V190" stroke="#d0d0d0" stroke-width="0.9"/><path d="M709.80 132 V190" stroke="#d0d0d0" stroke-width="0.9"/><path d="M58.90 132 V562.4" stroke="#6c6c6c" stroke-width="1.3"/><path d="M0 145.48 H58.6" stroke="#686868" stroke-width="1.15"/><path d="M0 158.82 H58.6" stroke="#686868" stroke-width="1.15"/><path d="M0 172.15 H58.6" stroke="#686868" stroke-width="1.15"/><path d="M0 189.48 H58.6" stroke="#686868" stroke-width="1.15"/><path d="M0 202.81 H58.6" stroke="#686868" stroke-width="1.15"/><path d="M0 216.15 H58.6" stroke="#686868" stroke-width="1.15"/><path d="M0 229.48 H58.6" stroke="#686868" stroke-width="1.15"/><path d="M0 242.81 H58.6" stroke="#686868" stroke-width="1.15"/><path d="M0 256.15 H58.6" stroke="#686868" stroke-width="1.15"/><path d="M0 269.48 H58.6" stroke="#686868" stroke-width="1.15"/><path d="M0 282.81 H58.6" stroke="#686868" stroke-width="1.15"/><path d="M0 296.15 H58.6" stroke="#686868" stroke-width="1.15"/><path d="M0 309.48 H58.6" stroke="#686868" stroke-width="1.15"/><path d="M0 322.81 H58.6" stroke="#686868" stroke-width="1.15"/><path d="M0 336.15 H58.6" stroke="#686868" stroke-width="1.15"/><path d="M0 349.48 H58.6" stroke="#686868" stroke-width="1.15"/><path d="M0 362.81 H58.6" stroke="#686868" stroke-width="1.15"/><path d="M0 376.15 H58.6" stroke="#686868" stroke-width="1.15"/><path d="M0 389.48 H58.6" stroke="#686868" stroke-width="1.15"/><path d="M0 402.81 H58.6" stroke="#686868" stroke-width="1.15"/><path d="M0 416.15 H58.6" stroke="#686868" stroke-width="1.15"/><path d="M0 429.48 H58.6" stroke="#686868" stroke-width="1.15"/><path d="M0 442.81 H58.6" stroke="#686868" stroke-width="1.15"/><path d="M0 456.15 H58.6" stroke="#686868" stroke-width="1.15"/><path d="M0 469.48 H58.6" stroke="#686868" stroke-width="1.15"/><path d="M0 482.81 H58.6" stroke="#686868" stroke-width="1.15"/><path d="M0 496.15 H58.6" stroke="#686868" stroke-width="1.15"/><path d="M0 509.48 H58.6" stroke="#686868" stroke-width="1.15"/><path d="M0 522.81 H58.6" stroke="#686868" stroke-width="1.15"/><path d="M0 536.15 H58.6" stroke="#686868" stroke-width="1.15"/><path d="M0 549.48 H58.6" stroke="#686868" stroke-width="1.15"/><path d="M0 562.81 H58.6" stroke="#686868" stroke-width="1.15"/></svg>
<div style="left:59.5px;top:469.7299999999998px;width:120px;height:12.533333333333333px;background:#8c9cec;"></div>
<div style="left:59.5px;top:229.93000000000006px;width:120px;height:12.433333333333334px;background:#a6caf0;"></div>
<svg style="left:0px;top:0px;" width="200" height="576" viewBox="0 0 200 576"><path d="M78.5 469.73 v12.53 M146.9 469.73 v12.53" stroke="#a4aeea" stroke-width="0.9"/></svg>
<svg style="left:147px;top:472.7299999999998px;" width="4" height="6.4" viewBox="0 0 4 6.4"><path d="M1.8 0.4 Q3.2 0.4 3.2 2.8 Q3.2 5.8 1.8 5.8 Q0.4 5.8 0.4 2.8 Q0.4 0.4 1.8 0.4Z" fill="#1a1f5a"/></svg>
<div style="left:0px;top:118.6px;width:710px;height:13.4px;background:#5f5f5f;"></div>
<div style="left:0px;top:119.2px;width:58.699999999999996px;height:11.9px;background:linear-gradient(180deg,#fcfcfc 0%,#efefef 45%,#d3d3d3 100%);border-left:0.7px solid #fff;border-top:0.6px solid #fff;"></div>
<span class="t" style="left:17.00px;top:121.00px;font:bold 7.6px/10.64px 'DejaVu Sans Condensed','DejaVu Sans','Liberation Sans',sans-serif;color:#404040;transform-origin:0 50%;transform:scaleX(0.9619);">Affaire</span>
<div style="left:59.8px;top:119.2px;width:17.599999999999998px;height:11.9px;background:linear-gradient(180deg,#fcfcfc 0%,#efefef 45%,#d3d3d3 100%);border-left:0.7px solid #fff;border-top:0.6px solid #fff;"></div>
<span class="t" style="left:63.80px;top:122.00px;font:bold 5.2px/7.28px 'DejaVu Sans Condensed','DejaVu Sans','Liberation Sans',sans-serif;color:#4c4c4c;transform-origin:0 50%;transform:scaleX(1.0449);">LOT</span>
<div style="left:78.3px;top:119.2px;width:67.80000000000001px;height:11.9px;background:linear-gradient(180deg,#fcfcfc 0%,#efefef 45%,#d3d3d3 100%);border-left:0.7px solid #fff;border-top:0.6px solid #fff;"></div>
<span class="t" style="left:105.50px;top:122.00px;font:bold 5.2px/7.28px 'DejaVu Sans Condensed','DejaVu Sans','Liberation Sans',sans-serif;color:#4c4c4c;transform-origin:0 50%;transform:scaleX(0.9948);">TIERS</span>
<div style="left:147px;top:119.2px;width:61.0px;height:11.9px;background:linear-gradient(180deg,#fcfcfc 0%,#efefef 45%,#d3d3d3 100%);border-left:0.7px solid #fff;border-top:0.6px solid #fff;"></div>
<span class="t" style="left:170.80px;top:122.00px;font:bold 5.2px/7.28px 'DejaVu Sans Condensed','DejaVu Sans','Liberation Sans',sans-serif;color:#4c4c4c;transform-origin:0 50%;transform:scaleX(1.1475);">ETAT</span>
<div style="left:209px;top:119.2px;width:116.4px;height:11.9px;background:linear-gradient(180deg,#fcfcfc 0%,#efefef 45%,#d3d3d3 100%);border-left:0.7px solid #fff;border-top:0.6px solid #fff;"></div>
<span class="t" style="left:227.00px;top:122.00px;font:bold 5.2px/7.28px 'DejaVu Sans Condensed','DejaVu Sans','Liberation Sans',sans-serif;color:#4c4c4c;transform-origin:0 50%;transform:scaleX(1.0754);">DESIGNATION / DESCRIPTION</span>
<div style="left:326.6px;top:119.2px;width:21.2px;height:11.9px;background:linear-gradient(180deg,#fcfcfc 0%,#efefef 45%,#d3d3d3 100%);border-left:0.7px solid #fff;border-top:0.6px solid #fff;"></div>
<span class="t" style="left:328.80px;top:122.00px;font:bold 5.2px/7.28px 'DejaVu Sans Condensed','DejaVu Sans','Liberation Sans',sans-serif;color:#4c4c4c;transform-origin:0 50%;transform:scaleX(1.0007);">ENGA..</span>
<div style="left:349px;top:119.2px;width:32.0px;height:11.9px;background:linear-gradient(180deg,#fcfcfc 0%,#efefef 45%,#d3d3d3 100%);border-left:0.7px solid #fff;border-top:0.6px solid #fff;"></div>
<span class="t" style="left:360.00px;top:122.00px;font:bold 5.2px/7.28px 'DejaVu Sans Condensed','DejaVu Sans','Liberation Sans',sans-serif;color:#4c4c4c;transform-origin:0 50%;transform:scaleX(1.0441);">QTE</span>
<div style="left:382.2px;top:119.2px;width:52.9px;height:11.9px;background:linear-gradient(180deg,#fcfcfc 0%,#efefef 45%,#d3d3d3 100%);border-left:0.7px solid #fff;border-top:0.6px solid #fff;"></div>
<span class="t" style="left:391.30px;top:122.00px;font:bold 5.2px/7.28px 'DejaVu Sans Condensed','DejaVu Sans','Liberation Sans',sans-serif;color:#4c4c4c;transform-origin:0 50%;transform:scaleX(1.0823);">PX UNITAIRE</span>
<div style="left:436.3px;top:119.2px;width:52.6px;height:11.9px;background:linear-gradient(180deg,#fcfcfc 0%,#efefef 45%,#d3d3d3 100%);border-left:0.7px solid #fff;border-top:0.6px solid #fff;"></div>
<span class="t" style="left:454.00px;top:122.00px;font:bold 5.2px/7.28px 'DejaVu Sans Condensed','DejaVu Sans','Liberation Sans',sans-serif;color:#4c4c4c;transform-origin:0 50%;transform:scaleX(0.9819);">MTT HT</span>
<div style="left:490px;top:119.2px;width:25.799999999999997px;height:11.9px;background:linear-gradient(180deg,#fcfcfc 0%,#efefef 45%,#d3d3d3 100%);border-left:0.7px solid #fff;border-top:0.6px solid #fff;"></div>
<span class="t" style="left:498.00px;top:122.00px;font:bold 5.2px/7.28px 'DejaVu Sans Condensed','DejaVu Sans','Liberation Sans',sans-serif;color:#4c4c4c;transform-origin:0 50%;transform:scaleX(1.0435);">TVA</span>
<div style="left:517px;top:119.2px;width:32.8px;height:11.9px;background:linear-gradient(180deg,#fcfcfc 0%,#efefef 45%,#d3d3d3 100%);border-left:0.7px solid #fff;border-top:0.6px solid #fff;"></div>
<span class="t" style="left:524.00px;top:122.00px;font:bold 5.2px/7.28px 'DejaVu Sans Condensed','DejaVu Sans','Liberation Sans',sans-serif;color:#4c4c4c;transform-origin:0 50%;transform:scaleX(1.1614);">% TVA</span>
<div style="left:551px;top:119.2px;width:31.4px;height:11.9px;background:linear-gradient(180deg,#fcfcfc 0%,#efefef 45%,#d3d3d3 100%);border-left:0.7px solid #fff;border-top:0.6px solid #fff;"></div>
<span class="t" style="left:565.00px;top:122.00px;font:bold 5.2px/7.28px 'DejaVu Sans Condensed','DejaVu Sans','Liberation Sans',sans-serif;color:#4c4c4c;transform-origin:0 50%;transform:scaleX(1.0667);">%</span>
<div style="left:583.6px;top:119.2px;width:46.8px;height:11.9px;background:linear-gradient(180deg,#fcfcfc 0%,#efefef 45%,#d3d3d3 100%);border-left:0.7px solid #fff;border-top:0.6px solid #fff;"></div>
<span class="t" style="left:596.50px;top:122.00px;font:bold 5.2px/7.28px 'DejaVu Sans Condensed','DejaVu Sans','Liberation Sans',sans-serif;color:#4c4c4c;transform-origin:0 50%;transform:scaleX(0.9205);">MTT TVA</span>
<div style="left:631.6px;top:119.2px;width:77.4px;height:11.9px;background:linear-gradient(180deg,#fcfcfc 0%,#efefef 45%,#d3d3d3 100%);border-left:0.7px solid #fff;border-top:0.6px solid #fff;"></div>
<span class="t" style="left:660.00px;top:122.00px;font:bold 5.2px/7.28px 'DejaVu Sans Condensed','DejaVu Sans','Liberation Sans',sans-serif;color:#4c4c4c;transform-origin:0 50%;transform:scaleX(0.9263);">MTT TTC</span>
<svg style="left:0.6px;top:133.9px;" width="9.4" height="8.4" viewBox="0 0 9.4 8.4"><path d="M1.5 6.2 L6.9 0.9 Q8.2 0.5 8.6 1.9 L3.3 7.4 L0.7 7.9Z" fill="#fbe29a" stroke="#dc9a38" stroke-width="0.6" stroke-linejoin="round"/><path d="M2.4 5.4 L7.4 1.3" stroke="#fff0b8" stroke-width="0.7"/><path d="M1.5 6.2 L0.7 7.9 L3.3 7.4Z" fill="#9a6a2a"/><circle cx="7.2" cy="6.1" r="1.5" fill="#f4fbe8" stroke="#62a62c" stroke-width="0.95"/></svg>
<span class="t" style="left:13.00px;top:133.00px;font:bold 5.4px/7.56px 'DejaVu Sans Condensed','DejaVu Sans','Liberation Sans',sans-serif;color:#383838;transform-origin:0 50%;transform:scaleX(1.2209);">**</span>
<svg style="left:0.6px;top:147.23333333333335px;" width="9.4" height="8.4" viewBox="0 0 9.4 8.4"><path d="M1.5 6.2 L6.9 0.9 Q8.2 0.5 8.6 1.9 L3.3 7.4 L0.7 7.9Z" fill="#fbe29a" stroke="#dc9a38" stroke-width="0.6" stroke-linejoin="round"/><path d="M2.4 5.4 L7.4 1.3" stroke="#fff0b8" stroke-width="0.7"/><path d="M1.5 6.2 L0.7 7.9 L3.3 7.4Z" fill="#9a6a2a"/><circle cx="7.2" cy="6.1" r="1.5" fill="#f4fbe8" stroke="#62a62c" stroke-width="0.95"/></svg>
<span class="t" style="left:13.00px;top:146.00px;font:bold 5.4px/7.56px 'DejaVu Sans Condensed','DejaVu Sans','Liberation Sans',sans-serif;color:#383838;transform-origin:0 50%;transform:scaleX(1.2209);">**</span>
<svg style="left:0.6px;top:160.5666666666667px;" width="9.4" height="8.4" viewBox="0 0 9.4 8.4"><path d="M1.5 6.2 L6.9 0.9 Q8.2 0.5 8.6 1.9 L3.3 7.4 L0.7 7.9Z" fill="#fbe29a" stroke="#dc9a38" stroke-width="0.6" stroke-linejoin="round"/><path d="M2.4 5.4 L7.4 1.3" stroke="#fff0b8" stroke-width="0.7"/><path d="M1.5 6.2 L0.7 7.9 L3.3 7.4Z" fill="#9a6a2a"/><circle cx="7.2" cy="6.1" r="1.5" fill="#f4fbe8" stroke="#62a62c" stroke-width="0.95"/></svg>
<span class="t" style="left:13.00px;top:160.00px;font:bold 5.4px/7.56px 'DejaVu Sans Condensed','DejaVu Sans','Liberation Sans',sans-serif;color:#383838;transform-origin:0 50%;transform:scaleX(1.2209);">**</span>
<svg style="left:0.6px;top:173.90000000000003px;" width="9.4" height="8.4" viewBox="0 0 9.4 8.4"><path d="M1.5 6.2 L6.9 0.9 Q8.2 0.5 8.6 1.9 L3.3 7.4 L0.7 7.9Z" fill="#fbe29a" stroke="#dc9a38" stroke-width="0.6" stroke-linejoin="round"/><path d="M2.4 5.4 L7.4 1.3" stroke="#fff0b8" stroke-width="0.7"/><path d="M1.5 6.2 L0.7 7.9 L3.3 7.4Z" fill="#9a6a2a"/><circle cx="7.2" cy="6.1" r="1.5" fill="#f4fbe8" stroke="#62a62c" stroke-width="0.95"/></svg>
<span class="t" style="left:13.00px;top:173.00px;font:bold 5.4px/7.56px 'DejaVu Sans Condensed','DejaVu Sans','Liberation Sans',sans-serif;color:#383838;transform-origin:0 50%;transform:scaleX(1.2209);">**</span>
<svg style="left:0.6px;top:191.23000000000005px;" width="9.4" height="8.4" viewBox="0 0 9.4 8.4"><path d="M1.5 6.2 L6.9 0.9 Q8.2 0.5 8.6 1.9 L3.3 7.4 L0.7 7.9Z" fill="#fbe29a" stroke="#dc9a38" stroke-width="0.6" stroke-linejoin="round"/><path d="M2.4 5.4 L7.4 1.3" stroke="#fff0b8" stroke-width="0.7"/><path d="M1.5 6.2 L0.7 7.9 L3.3 7.4Z" fill="#9a6a2a"/><circle cx="7.2" cy="6.1" r="1.5" fill="#f4fbe8" stroke="#62a62c" stroke-width="0.95"/></svg>
<span class="t" style="left:14.50px;top:190.00px;font:bold 5.4px/7.56px 'DejaVu Sans Condensed','DejaVu Sans','Liberation Sans',sans-serif;color:#383838;transform-origin:0 50%;transform:scaleX(1.0036);">Recette</span>
<svg style="left:0.6px;top:204.5633333333334px;" width="9.4" height="8.4" viewBox="0 0 9.4 8.4"><path d="M1.5 6.2 L6.9 0.9 Q8.2 0.5 8.6 1.9 L3.3 7.4 L0.7 7.9Z" fill="#fbe29a" stroke="#dc9a38" stroke-width="0.6" stroke-linejoin="round"/><path d="M2.4 5.4 L7.4 1.3" stroke="#fff0b8" stroke-width="0.7"/><path d="M1.5 6.2 L0.7 7.9 L3.3 7.4Z" fill="#9a6a2a"/><circle cx="7.2" cy="6.1" r="1.5" fill="#f4fbe8" stroke="#62a62c" stroke-width="0.95"/></svg>
<span class="t" style="left:14.50px;top:204.00px;font:bold 5.4px/7.56px 'DejaVu Sans Condensed','DejaVu Sans','Liberation Sans',sans-serif;color:#383838;transform-origin:0 50%;transform:scaleX(0.9980);">LOTS</span>
<svg style="left:0.6px;top:217.89666666666673px;" width="9.4" height="8.4" viewBox="0 0 9.4 8.4"><path d="M1.5 6.2 L6.9 0.9 Q8.2 0.5 8.6 1.9 L3.3 7.4 L0.7 7.9Z" fill="#fbe29a" stroke="#dc9a38" stroke-width="0.6" stroke-linejoin="round"/><path d="M2.4 5.4 L7.4 1.3" stroke="#fff0b8" stroke-width="0.7"/><path d="M1.5 6.2 L0.7 7.9 L3.3 7.4Z" fill="#9a6a2a"/><circle cx="7.2" cy="6.1" r="1.5" fill="#f4fbe8" stroke="#62a62c" stroke-width="0.95"/></svg>
<span class="t" style="left:14.50px;top:217.00px;font:bold 5.4px/7.56px 'DejaVu Sans Condensed','DejaVu Sans','Liberation Sans',sans-serif;color:#383838;transform-origin:0 50%;transform:scaleX(0.9980);">LOTS</span>
<svg style="left:0.6px;top:231.23000000000008px;" width="9.4" height="8.4" viewBox="0 0 9.4 8.4"><path d="M1.5 6.2 L6.9 0.9 Q8.2 0.5 8.6 1.9 L3.3 7.4 L0.7 7.9Z" fill="#fbe29a" stroke="#dc9a38" stroke-width="0.6" stroke-linejoin="round"/><path d="M2.4 5.4 L7.4 1.3" stroke="#fff0b8" stroke-width="0.7"/><path d="M1.5 6.2 L0.7 7.9 L3.3 7.4Z" fill="#9a6a2a"/><circle cx="7.2" cy="6.1" r="1.5" fill="#f4fbe8" stroke="#62a62c" stroke-width="0.95"/></svg>
<span class="t" style="left:14.50px;top:230.00px;font:bold 5.4px/7.56px 'DejaVu Sans Condensed','DejaVu Sans','Liberation Sans',sans-serif;color:#383838;transform-origin:0 50%;transform:scaleX(0.9980);">LOTS</span>
<svg style="left:0.6px;top:244.56333333333342px;" width="9.4" height="8.4" viewBox="0 0 9.4 8.4"><path d="M1.5 6.2 L6.9 0.9 Q8.2 0.5 8.6 1.9 L3.3 7.4 L0.7 7.9Z" fill="#fbe29a" stroke="#dc9a38" stroke-width="0.6" stroke-linejoin="round"/><path d="M2.4 5.4 L7.4 1.3" stroke="#fff0b8" stroke-width="0.7"/><path d="M1.5 6.2 L0.7 7.9 L3.3 7.4Z" fill="#9a6a2a"/><circle cx="7.2" cy="6.1" r="1.5" fill="#f4fbe8" stroke="#62a62c" stroke-width="0.95"/></svg>
<span class="t" style="left:14.50px;top:244.00px;font:bold 5.4px/7.56px 'DejaVu Sans Condensed','DejaVu Sans','Liberation Sans',sans-serif;color:#383838;transform-origin:0 50%;transform:scaleX(0.9980);">LOTS</span>
<svg style="left:0.6px;top:257.89666666666676px;" width="9.4" height="8.4" viewBox="0 0 9.4 8.4"><path d="M1.5 6.2 L6.9 0.9 Q8.2 0.5 8.6 1.9 L3.3 7.4 L0.7 7.9Z" fill="#fbe29a" stroke="#dc9a38" stroke-width="0.6" stroke-linejoin="round"/><path d="M2.4 5.4 L7.4 1.3" stroke="#fff0b8" stroke-width="0.7"/><path d="M1.5 6.2 L0.7 7.9 L3.3 7.4Z" fill="#9a6a2a"/><circle cx="7.2" cy="6.1" r="1.5" fill="#f4fbe8" stroke="#62a62c" stroke-width="0.95"/></svg>
<span class="t" style="left:14.50px;top:257.00px;font:bold 5.4px/7.56px 'DejaVu Sans Condensed','DejaVu Sans','Liberation Sans',sans-serif;color:#383838;transform-origin:0 50%;transform:scaleX(0.9980);">LOTS</span>
<svg style="left:0.6px;top:271.2300000000001px;" width="9.4" height="8.4" viewBox="0 0 9.4 8.4"><path d="M1.5 6.2 L6.9 0.9 Q8.2 0.5 8.6 1.9 L3.3 7.4 L0.7 7.9Z" fill="#fbe29a" stroke="#dc9a38" stroke-width="0.6" stroke-linejoin="round"/><path d="M2.4 5.4 L7.4 1.3" stroke="#fff0b8" stroke-width="0.7"/><path d="M1.5 6.2 L0.7 7.9 L3.3 7.4Z" fill="#9a6a2a"/><circle cx="7.2" cy="6.1" r="1.5" fill="#f4fbe8" stroke="#62a62c" stroke-width="0.95"/></svg>
<span class="t" style="left:14.50px;top:270.00px;font:bold 5.4px/7.56px 'DejaVu Sans Condensed','DejaVu Sans','Liberation Sans',sans-serif;color:#383838;transform-origin:0 50%;transform:scaleX(0.9980);">LOTS</span>
<svg style="left:0.6px;top:284.5633333333334px;" width="9.4" height="8.4" viewBox="0 0 9.4 8.4"><path d="M1.5 6.2 L6.9 0.9 Q8.2 0.5 8.6 1.9 L3.3 7.4 L0.7 7.9Z" fill="#fbe29a" stroke="#dc9a38" stroke-width="0.6" stroke-linejoin="round"/><path d="M2.4 5.4 L7.4 1.3" stroke="#fff0b8" stroke-width="0.7"/><path d="M1.5 6.2 L0.7 7.9 L3.3 7.4Z" fill="#9a6a2a"/><circle cx="7.2" cy="6.1" r="1.5" fill="#f4fbe8" stroke="#62a62c" stroke-width="0.95"/></svg>
<span class="t" style="left:14.50px;top:284.00px;font:bold 5.4px/7.56px 'DejaVu Sans Condensed','DejaVu Sans','Liberation Sans',sans-serif;color:#383838;transform-origin:0 50%;transform:scaleX(0.9980);">LOTS</span>
<svg style="left:0.6px;top:297.8966666666667px;" width="9.4" height="8.4" viewBox="0 0 9.4 8.4"><path d="M1.5 6.2 L6.9 0.9 Q8.2 0.5 8.6 1.9 L3.3 7.4 L0.7 7.9Z" fill="#fbe29a" stroke="#dc9a38" stroke-width="0.6" stroke-linejoin="round"/><path d="M2.4 5.4 L7.4 1.3" stroke="#fff0b8" stroke-width="0.7"/><path d="M1.5 6.2 L0.7 7.9 L3.3 7.4Z" fill="#9a6a2a"/><circle cx="7.2" cy="6.1" r="1.5" fill="#f4fbe8" stroke="#62a62c" stroke-width="0.95"/></svg>
<span class="t" style="left:14.50px;top:297.00px;font:bold 5.4px/7.56px 'DejaVu Sans Condensed','DejaVu Sans','Liberation Sans',sans-serif;color:#383838;transform-origin:0 50%;transform:scaleX(0.9980);">LOTS</span>
<svg style="left:0.6px;top:311.23px;" width="9.4" height="8.4" viewBox="0 0 9.4 8.4"><path d="M1.5 6.2 L6.9 0.9 Q8.2 0.5 8.6 1.9 L3.3 7.4 L0.7 7.9Z" fill="#fbe29a" stroke="#dc9a38" stroke-width="0.6" stroke-linejoin="round"/><path d="M2.4 5.4 L7.4 1.3" stroke="#fff0b8" stroke-width="0.7"/><path d="M1.5 6.2 L0.7 7.9 L3.3 7.4Z" fill="#9a6a2a"/><circle cx="7.2" cy="6.1" r="1.5" fill="#f4fbe8" stroke="#62a62c" stroke-width="0.95"/></svg>
<span class="t" style="left:13.00px;top:310.00px;font:bold 5.4px/7.56px 'DejaVu Sans Condensed','DejaVu Sans','Liberation Sans',sans-serif;color:#383838;transform-origin:0 50%;transform:scaleX(1.0448);">** LOTS</span>
<svg style="left:0.6px;top:324.56333333333333px;" width="9.4" height="8.4" viewBox="0 0 9.4 8.4"><path d="M1.5 6.2 L6.9 0.9 Q8.2 0.5 8.6 1.9 L3.3 7.4 L0.7 7.9Z" fill="#fbe29a" stroke="#dc9a38" stroke-width="0.6" stroke-linejoin="round"/><path d="M2.4 5.4 L7.4 1.3" stroke="#fff0b8" stroke-width="0.7"/><path d="M1.5 6.2 L0.7 7.9 L3.3 7.4Z" fill="#9a6a2a"/><circle cx="7.2" cy="6.1" r="1.5" fill="#f4fbe8" stroke="#62a62c" stroke-width="0.95"/></svg>
<span class="t" style="left:13.00px;top:324.00px;font:bold 5.4px/7.56px 'DejaVu Sans Condensed','DejaVu Sans','Liberation Sans',sans-serif;color:#383838;transform-origin:0 50%;transform:scaleX(1.2209);">**</span>
<svg style="left:0.6px;top:337.89666666666665px;" width="9.4" height="8.4" viewBox="0 0 9.4 8.4"><path d="M1.5 6.2 L6.9 0.9 Q8.2 0.5 8.6 1.9 L3.3 7.4 L0.7 7.9Z" fill="#fbe29a" stroke="#dc9a38" stroke-width="0.6" stroke-linejoin="round"/><path d="M2.4 5.4 L7.4 1.3" stroke="#fff0b8" stroke-width="0.7"/><path d="M1.5 6.2 L0.7 7.9 L3.3 7.4Z" fill="#9a6a2a"/><circle cx="7.2" cy="6.1" r="1.5" fill="#f4fbe8" stroke="#e98a1f" stroke-width="0.95"/></svg>
<span class="t" style="left:14.50px;top:337.00px;font:bold 5.4px/7.56px 'DejaVu Sans Condensed','DejaVu Sans','Liberation Sans',sans-serif;color:#383838;transform-origin:0 50%;transform:scaleX(0.9360);">Dépense</span>
<svg style="left:0.6px;top:351.22999999999996px;" width="9.4" height="8.4" viewBox="0 0 9.4 8.4"><path d="M1.5 6.2 L6.9 0.9 Q8.2 0.5 8.6 1.9 L3.3 7.4 L0.7 7.9Z" fill="#fbe29a" stroke="#dc9a38" stroke-width="0.6" stroke-linejoin="round"/><path d="M2.4 5.4 L7.4 1.3" stroke="#fff0b8" stroke-width="0.7"/><path d="M1.5 6.2 L0.7 7.9 L3.3 7.4Z" fill="#9a6a2a"/><circle cx="7.2" cy="6.1" r="1.5" fill="#f4fbe8" stroke="#e98a1f" stroke-width="0.95"/></svg>
<span class="t" style="left:14.50px;top:350.00px;font:bold 5.4px/7.56px 'DejaVu Sans Condensed','DejaVu Sans','Liberation Sans',sans-serif;color:#383838;transform-origin:0 50%;transform:scaleX(0.9360);">Dépense</span>
<svg style="left:0.6px;top:364.5633333333333px;" width="9.4" height="8.4" viewBox="0 0 9.4 8.4"><path d="M1.5 6.2 L6.9 0.9 Q8.2 0.5 8.6 1.9 L3.3 7.4 L0.7 7.9Z" fill="#fbe29a" stroke="#dc9a38" stroke-width="0.6" stroke-linejoin="round"/><path d="M2.4 5.4 L7.4 1.3" stroke="#fff0b8" stroke-width="0.7"/><path d="M1.5 6.2 L0.7 7.9 L3.3 7.4Z" fill="#9a6a2a"/><circle cx="7.2" cy="6.1" r="1.5" fill="#f4fbe8" stroke="#e98a1f" stroke-width="0.95"/></svg>
<span class="t" style="left:14.50px;top:364.00px;font:bold 5.4px/7.56px 'DejaVu Sans Condensed','DejaVu Sans','Liberation Sans',sans-serif;color:#383838;transform-origin:0 50%;transform:scaleX(0.9360);">Dépense</span>
<svg style="left:0.6px;top:377.8966666666666px;" width="9.4" height="8.4" viewBox="0 0 9.4 8.4"><path d="M1.5 6.2 L6.9 0.9 Q8.2 0.5 8.6 1.9 L3.3 7.4 L0.7 7.9Z" fill="#fbe29a" stroke="#dc9a38" stroke-width="0.6" stroke-linejoin="round"/><path d="M2.4 5.4 L7.4 1.3" stroke="#fff0b8" stroke-width="0.7"/><path d="M1.5 6.2 L0.7 7.9 L3.3 7.4Z" fill="#9a6a2a"/><circle cx="7.2" cy="6.1" r="1.5" fill="#f4fbe8" stroke="#e98a1f" stroke-width="0.95"/></svg>
<span class="t" style="left:14.50px;top:377.00px;font:bold 5.4px/7.56px 'DejaVu Sans Condensed','DejaVu Sans','Liberation Sans',sans-serif;color:#383838;transform-origin:0 50%;transform:scaleX(0.9360);">Dépense</span>
<svg style="left:0.6px;top:391.2299999999999px;" width="9.4" height="8.4" viewBox="0 0 9.4 8.4"><path d="M1.5 6.2 L6.9 0.9 Q8.2 0.5 8.6 1.9 L3.3 7.4 L0.7 7.9Z" fill="#fbe29a" stroke="#dc9a38" stroke-width="0.6" stroke-linejoin="round"/><path d="M2.4 5.4 L7.4 1.3" stroke="#fff0b8" stroke-width="0.7"/><path d="M1.5 6.2 L0.7 7.9 L3.3 7.4Z" fill="#9a6a2a"/><circle cx="7.2" cy="6.1" r="1.5" fill="#f4fbe8" stroke="#e98a1f" stroke-width="0.95"/></svg>
<span class="t" style="left:14.50px;top:390.00px;font:bold 5.4px/7.56px 'DejaVu Sans Condensed','DejaVu Sans','Liberation Sans',sans-serif;color:#383838;transform-origin:0 50%;transform:scaleX(0.9360);">Dépense</span>
<svg style="left:0.6px;top:404.5633333333332px;" width="9.4" height="8.4" viewBox="0 0 9.4 8.4"><path d="M1.5 6.2 L6.9 0.9 Q8.2 0.5 8.6 1.9 L3.3 7.4 L0.7 7.9Z" fill="#fbe29a" stroke="#dc9a38" stroke-width="0.6" stroke-linejoin="round"/><path d="M2.4 5.4 L7.4 1.3" stroke="#fff0b8" stroke-width="0.7"/><path d="M1.5 6.2 L0.7 7.9 L3.3 7.4Z" fill="#9a6a2a"/><circle cx="7.2" cy="6.1" r="1.5" fill="#f4fbe8" stroke="#e98a1f" stroke-width="0.95"/></svg>
<span class="t" style="left:14.50px;top:404.00px;font:bold 5.4px/7.56px 'DejaVu Sans Condensed','DejaVu Sans','Liberation Sans',sans-serif;color:#383838;transform-origin:0 50%;transform:scaleX(0.9360);">Dépense</span>
<svg style="left:0.6px;top:417.89666666666653px;" width="9.4" height="8.4" viewBox="0 0 9.4 8.4"><path d="M1.5 6.2 L6.9 0.9 Q8.2 0.5 8.6 1.9 L3.3 7.4 L0.7 7.9Z" fill="#fbe29a" stroke="#dc9a38" stroke-width="0.6" stroke-linejoin="round"/><path d="M2.4 5.4 L7.4 1.3" stroke="#fff0b8" stroke-width="0.7"/><path d="M1.5 6.2 L0.7 7.9 L3.3 7.4Z" fill="#9a6a2a"/><circle cx="7.2" cy="6.1" r="1.5" fill="#f4fbe8" stroke="#e98a1f" stroke-width="0.95"/></svg>
<span class="t" style="left:14.50px;top:417.00px;font:bold 5.4px/7.56px 'DejaVu Sans Condensed','DejaVu Sans','Liberation Sans',sans-serif;color:#383838;transform-origin:0 50%;transform:scaleX(0.9360);">Dépense</span>
<svg style="left:0.6px;top:431.22999999999985px;" width="9.4" height="8.4" viewBox="0 0 9.4 8.4"><path d="M1.5 6.2 L6.9 0.9 Q8.2 0.5 8.6 1.9 L3.3 7.4 L0.7 7.9Z" fill="#fbe29a" stroke="#dc9a38" stroke-width="0.6" stroke-linejoin="round"/><path d="M2.4 5.4 L7.4 1.3" stroke="#fff0b8" stroke-width="0.7"/><path d="M1.5 6.2 L0.7 7.9 L3.3 7.4Z" fill="#9a6a2a"/><circle cx="7.2" cy="6.1" r="1.5" fill="#f4fbe8" stroke="#e98a1f" stroke-width="0.95"/></svg>
<span class="t" style="left:14.50px;top:430.00px;font:bold 5.4px/7.56px 'DejaVu Sans Condensed','DejaVu Sans','Liberation Sans',sans-serif;color:#383838;transform-origin:0 50%;transform:scaleX(0.9360);">Dépense</span>
<svg style="left:0.6px;top:444.56333333333316px;" width="9.4" height="8.4" viewBox="0 0 9.4 8.4"><path d="M1.5 6.2 L6.9 0.9 Q8.2 0.5 8.6 1.9 L3.3 7.4 L0.7 7.9Z" fill="#fbe29a" stroke="#dc9a38" stroke-width="0.6" stroke-linejoin="round"/><path d="M2.4 5.4 L7.4 1.3" stroke="#fff0b8" stroke-width="0.7"/><path d="M1.5 6.2 L0.7 7.9 L3.3 7.4Z" fill="#9a6a2a"/><circle cx="7.2" cy="6.1" r="1.5" fill="#f4fbe8" stroke="#e98a1f" stroke-width="0.95"/></svg>
<span class="t" style="left:14.50px;top:444.00px;font:bold 5.4px/7.56px 'DejaVu Sans Condensed','DejaVu Sans','Liberation Sans',sans-serif;color:#383838;transform-origin:0 50%;transform:scaleX(0.9360);">Dépense</span>
<svg style="left:0.6px;top:457.8966666666665px;" width="9.4" height="8.4" viewBox="0 0 9.4 8.4"><path d="M1.5 6.2 L6.9 0.9 Q8.2 0.5 8.6 1.9 L3.3 7.4 L0.7 7.9Z" fill="#fbe29a" stroke="#dc9a38" stroke-width="0.6" stroke-linejoin="round"/><path d="M2.4 5.4 L7.4 1.3" stroke="#fff0b8" stroke-width="0.7"/><path d="M1.5 6.2 L0.7 7.9 L3.3 7.4Z" fill="#9a6a2a"/><circle cx="7.2" cy="6.1" r="1.5" fill="#f4fbe8" stroke="#e98a1f" stroke-width="0.95"/></svg>
<span class="t" style="left:14.50px;top:457.00px;font:bold 5.4px/7.56px 'DejaVu Sans Condensed','DejaVu Sans','Liberation Sans',sans-serif;color:#383838;transform-origin:0 50%;transform:scaleX(0.9360);">Dépense</span>
<svg style="left:1.2px;top:471.62999999999977px;" width="6.4" height="7.6" viewBox="0 0 6.4 7.6"><rect x="0.3" y="0.3" width="5.6" height="6.8" fill="#eef0f6" stroke="#9aa0b0" stroke-width="0.5"/><rect x="1" y="1" width="4.2" height="1.8" fill="#5a86d0"/><path d="M1 4 H5.2 M1 5.4 H5.2 M1 6.5 H5.2" stroke="#a8a8b8" stroke-width="0.6"/></svg>
<span class="t" style="left:14.50px;top:470.00px;font:bold 5.4px/7.56px 'DejaVu Sans Condensed','DejaVu Sans','Liberation Sans',sans-serif;color:#383838;transform-origin:0 50%;transform:scaleX(0.9778);">S.Tot N1</span>
<svg style="left:0.6px;top:484.5633333333331px;" width="9.4" height="8.4" viewBox="0 0 9.4 8.4"><path d="M1.5 6.2 L6.9 0.9 Q8.2 0.5 8.6 1.9 L3.3 7.4 L0.7 7.9Z" fill="#fbe29a" stroke="#dc9a38" stroke-width="0.6" stroke-linejoin="round"/><path d="M2.4 5.4 L7.4 1.3" stroke="#fff0b8" stroke-width="0.7"/><path d="M1.5 6.2 L0.7 7.9 L3.3 7.4Z" fill="#9a6a2a"/><circle cx="7.2" cy="6.1" r="1.5" fill="#f4fbe8" stroke="#e98a1f" stroke-width="0.95"/></svg>
<span class="t" style="left:14.50px;top:484.00px;font:bold 5.4px/7.56px 'DejaVu Sans Condensed','DejaVu Sans','Liberation Sans',sans-serif;color:#383838;transform-origin:0 50%;transform:scaleX(0.9360);">Dépense</span>
<svg style="left:0.6px;top:497.8966666666664px;" width="9.4" height="8.4" viewBox="0 0 9.4 8.4"><path d="M1.5 6.2 L6.9 0.9 Q8.2 0.5 8.6 1.9 L3.3 7.4 L0.7 7.9Z" fill="#fbe29a" stroke="#dc9a38" stroke-width="0.6" stroke-linejoin="round"/><path d="M2.4 5.4 L7.4 1.3" stroke="#fff0b8" stroke-width="0.7"/><path d="M1.5 6.2 L0.7 7.9 L3.3 7.4Z" fill="#9a6a2a"/><circle cx="7.2" cy="6.1" r="1.5" fill="#f4fbe8" stroke="#e98a1f" stroke-width="0.95"/></svg>
<span class="t" style="left:14.50px;top:497.00px;font:bold 5.4px/7.56px 'DejaVu Sans Condensed','DejaVu Sans','Liberation Sans',sans-serif;color:#383838;transform-origin:0 50%;transform:scaleX(0.9360);">Dépense</span>
<svg style="left:0.6px;top:511.22999999999973px;" width="9.4" height="8.4" viewBox="0 0 9.4 8.4"><path d="M1.5 6.2 L6.9 0.9 Q8.2 0.5 8.6 1.9 L3.3 7.4 L0.7 7.9Z" fill="#fbe29a" stroke="#dc9a38" stroke-width="0.6" stroke-linejoin="round"/><path d="M2.4 5.4 L7.4 1.3" stroke="#fff0b8" stroke-width="0.7"/><path d="M1.5 6.2 L0.7 7.9 L3.3 7.4Z" fill="#9a6a2a"/><circle cx="7.2" cy="6.1" r="1.5" fill="#f4fbe8" stroke="#e98a1f" stroke-width="0.95"/></svg>
<span class="t" style="left:14.50px;top:510.00px;font:bold 5.4px/7.56px 'DejaVu Sans Condensed','DejaVu Sans','Liberation Sans',sans-serif;color:#383838;transform-origin:0 50%;transform:scaleX(0.9360);">Dépense</span>
<svg style="left:0.6px;top:524.563333333333px;" width="9.4" height="8.4" viewBox="0 0 9.4 8.4"><path d="M1.5 6.2 L6.9 0.9 Q8.2 0.5 8.6 1.9 L3.3 7.4 L0.7 7.9Z" fill="#fbe29a" stroke="#dc9a38" stroke-width="0.6" stroke-linejoin="round"/><path d="M2.4 5.4 L7.4 1.3" stroke="#fff0b8" stroke-width="0.7"/><path d="M1.5 6.2 L0.7 7.9 L3.3 7.4Z" fill="#9a6a2a"/><circle cx="7.2" cy="6.1" r="1.5" fill="#f4fbe8" stroke="#e98a1f" stroke-width="0.95"/></svg>
<span class="t" style="left:14.50px;top:524.00px;font:bold 5.4px/7.56px 'DejaVu Sans Condensed','DejaVu Sans','Liberation Sans',sans-serif;color:#383838;transform-origin:0 50%;transform:scaleX(0.9360);">Dépense</span>
<svg style="left:0.6px;top:537.8966666666664px;" width="9.4" height="8.4" viewBox="0 0 9.4 8.4"><path d="M1.5 6.2 L6.9 0.9 Q8.2 0.5 8.6 1.9 L3.3 7.4 L0.7 7.9Z" fill="#fbe29a" stroke="#dc9a38" stroke-width="0.6" stroke-linejoin="round"/><path d="M2.4 5.4 L7.4 1.3" stroke="#fff0b8" stroke-width="0.7"/><path d="M1.5 6.2 L0.7 7.9 L3.3 7.4Z" fill="#9a6a2a"/><circle cx="7.2" cy="6.1" r="1.5" fill="#f4fbe8" stroke="#e98a1f" stroke-width="0.95"/></svg>
<span class="t" style="left:14.50px;top:537.00px;font:bold 5.4px/7.56px 'DejaVu Sans Condensed','DejaVu Sans','Liberation Sans',sans-serif;color:#383838;transform-origin:0 50%;transform:scaleX(0.9360);">Dépense</span>
<svg style="left:0.6px;top:551.2299999999998px;" width="9.4" height="8.4" viewBox="0 0 9.4 8.4"><path d="M1.5 6.2 L6.9 0.9 Q8.2 0.5 8.6 1.9 L3.3 7.4 L0.7 7.9Z" fill="#fbe29a" stroke="#dc9a38" stroke-width="0.6" stroke-linejoin="round"/><path d="M2.4 5.4 L7.4 1.3" stroke="#fff0b8" stroke-width="0.7"/><path d="M1.5 6.2 L0.7 7.9 L3.3 7.4Z" fill="#9a6a2a"/><circle cx="7.2" cy="6.1" r="1.5" fill="#f4fbe8" stroke="#e98a1f" stroke-width="0.95"/></svg>
<span class="t" style="left:14.50px;top:550.00px;font:bold 5.4px/7.56px 'DejaVu Sans Condensed','DejaVu Sans','Liberation Sans',sans-serif;color:#383838;transform-origin:0 50%;transform:scaleX(0.9360);">Dépense</span>
<span class="t" style="left:147.50px;top:204.00px;font:6.5px/9.1px 'Liberation Sans',sans-serif;color:#1a1a1a;transform-origin:0 50%;transform:scaleX(0.8884);">LIBRE</span>
<span class="t" style="left:147.50px;top:217.00px;font:6.5px/9.1px 'Liberation Sans',sans-serif;color:#1a1a1a;transform-origin:0 50%;transform:scaleX(0.8884);">LIBRE</span>
<span class="t" style="left:147.50px;top:231.00px;font:6.5px/9.1px 'Liberation Sans',sans-serif;color:#1a1a1a;transform-origin:0 50%;transform:scaleX(0.8649);">ACTE</span>
<span class="t" style="left:78.80px;top:232.00px;font:6.3px/8.82px 'Liberation Sans',sans-serif;color:#1a1a1a;transform-origin:0 50%;transform:scaleX(0.8724);">sengelin marc</span>
<span class="t" style="left:147.50px;top:244.00px;font:6.5px/9.1px 'Liberation Sans',sans-serif;color:#1a1a1a;transform-origin:0 50%;transform:scaleX(0.8884);">LIBRE</span>
<span class="t" style="left:147.50px;top:257.00px;font:6.5px/9.1px 'Liberation Sans',sans-serif;color:#1a1a1a;transform-origin:0 50%;transform:scaleX(0.8884);">LIBRE</span>
<span class="t" style="left:147.50px;top:271.00px;font:6.5px/9.1px 'Liberation Sans',sans-serif;color:#1a1a1a;transform-origin:0 50%;transform:scaleX(0.8884);">LIBRE</span>
<span class="t" style="left:147.50px;top:284.00px;font:6.5px/9.1px 'Liberation Sans',sans-serif;color:#1a1a1a;transform-origin:0 50%;transform:scaleX(0.8884);">LIBRE</span>
<span class="t" style="left:147.50px;top:297.00px;font:6.5px/9.1px 'Liberation Sans',sans-serif;color:#1a1a1a;transform-origin:0 50%;transform:scaleX(0.8884);">LIBRE</span>
<div style="left:973px;top:119px;width:8.2px;height:443.4px;background:#e9e9e4;"></div>
<div style="left:973.8px;top:119.2px;width:7.2px;height:7.2px;background:#d4d0c8;border:0.6px solid #f8f8f8;border-right-color:#555;border-bottom-color:#555;"></div>
<svg style="left:975.4px;top:121.60000000000001px;" width="4" height="2.4" viewBox="0 0 4 2.4"><path d="M0 2.4 H4 L2 0Z" fill="#000"/></svg>
<div style="left:973.8px;top:126.4px;width:7.2px;height:9px;background:#d4d0c8;border:0.6px solid #f8f8f8;border-right-color:#555;border-bottom-color:#555;"></div>
<div style="left:973.8px;top:555px;width:7.2px;height:7.2px;background:#d4d0c8;border:0.6px solid #f8f8f8;border-right-color:#555;border-bottom-color:#555;"></div>
<svg style="left:975.4px;top:557.4px;" width="4" height="2.4" viewBox="0 0 4 2.4"><path d="M0 0 H4 L2 2.4Z" fill="#000"/></svg>
<svg style="left:1004px;top:161px;" width="14.6" height="16" viewBox="0 0 14.6 16"><rect x="0.6" y="0.5" width="12.6" height="14.8" fill="#fdfdfd" stroke="#d4d6dc" stroke-width="0.6"/><path d="M2.2 2.6 H11.6 M2.2 4.6 H11.6 M2.2 6.6 H11.6 M2.2 8.6 H11.6 M2.2 10.6 H11.6 M2.2 12.6 H9" stroke="#b4bccb" stroke-width="0.75"/><path d="M6.6 11.4 L11 4.2 L12.4 5.1 L8 12.3 L6.2 13.2Z" fill="#f4c860" stroke="#d0902a" stroke-width="0.4"/></svg>
<svg style="left:1002px;top:180px;" width="17" height="17" viewBox="0 0 17 17"><path d="M0.8 2.6 H5 L6.4 4.2 H14.4 V13 H0.8Z" fill="#f6dc84" stroke="#d4aa3c" stroke-width="0.6"/><circle cx="7.8" cy="7.4" r="4.3" fill="#cfe6fb" stroke="#9ab0cc" stroke-width="1.1"/><circle cx="6.8" cy="6.2" r="1.6" fill="#fff" opacity="0.85"/><path d="M11 10.8 L15.4 15.2" stroke="#b4723a" stroke-width="2.2" stroke-linecap="round"/></svg>
<svg style="left:1002px;top:200.6px;" width="17" height="16" viewBox="0 0 17 16"><circle cx="5.2" cy="5" r="3" fill="#f4cca0"/><path d="M2 4.6 Q2.2 0.6 5.2 0.8 Q8.2 0.6 8.4 4.6 Q5.2 2.6 2 4.6Z" fill="#6a3c1a"/><path d="M0.6 14.8 Q0.6 9 5.2 9 Q9.8 9 9.8 14.8Z" fill="#6aa8e4"/><circle cx="12" cy="5" r="3" fill="#efc08c"/><path d="M8.8 4.6 Q9 0.6 12 0.8 Q15 0.6 15.2 4.6 Q12 2.6 8.8 4.6Z" fill="#7a461e"/><path d="M7.6 14.8 Q7.6 9 12 9 Q16.4 9 16.4 14.8Z" fill="#e8b070"/><path d="M4.2 9.2 L5.2 11.6 L6.2 9.2Z" fill="#fff"/></svg>
<svg style="left:1003px;top:221px;" width="15" height="16" viewBox="0 0 15 16"><path d="M12.6 1.4 L4.4 10.8" stroke="#c4cad4" stroke-width="2.4" stroke-linecap="round"/><path d="M2 1.8 L12.6 14" stroke="#dfe3ea" stroke-width="1.9" stroke-linecap="round"/><path d="M11.4 12.6 L13 14.4" stroke="#b8bec8" stroke-width="2.8" stroke-linecap="round"/><path d="M4.8 9.4 L1.8 13.2" stroke="#1c1c1c" stroke-width="3.4" stroke-linecap="round"/><path d="M0.8 0.8 L4 2.4 L2.4 4Z" fill="#8a8f9a"/></svg>
<svg style="left:1003px;top:240px;" width="15" height="16.4" viewBox="0 0 15 16.4"><path d="M0.8 8.4 L6 1 L13.8 6.4 L8.6 12.8Z" fill="#44cc44" stroke="#1f8a2a" stroke-width="0.7"/><path d="M0.8 8.4 L0.8 13.4 L8.6 16 L8.6 12.8Z" fill="#eef0fa" stroke="#5a5fb8" stroke-width="0.6"/><path d="M8.6 12.8 L13.8 6.4 V11.4 L8.6 16Z" fill="#f8e0cc" stroke="#5a5fb8" stroke-width="0.6"/><rect x="10.2" y="11" width="1.8" height="3" fill="#eca05a"/></svg>
<svg style="left:1003px;top:259.6px;" width="16" height="16" viewBox="0 0 16 16"><path d="M1 10.4 Q0.6 1.4 7.6 1 Q14.6 1 14.6 9.4 L15.4 11.6 Q8 15.6 1 12.6Z" fill="#f7b628"/><path d="M2.8 5.6 Q4.8 1.8 8.8 2" stroke="#ffe08a" stroke-width="1.6" fill="none" stroke-linecap="round"/><path d="M1 11.2 Q8 14.4 15.2 10.8 L15.4 12.4 Q8 16 1 13.2Z" fill="#e69a1c"/></svg>
<div style="left:0px;top:562.4px;width:1024px;height:13.600000000000023px;background:#b9d3f3;"></div>
<div style="left:4px;top:563.4px;width:42.6px;height:11.6px;border:0.7px solid #a9c3e6;border-right-color:#d6e6fa;border-bottom-color:#d6e6fa;background:#b3cdee;"></div>
<span class="t" style="left:8.50px;top:566.00px;font:6.67px/9.34px 'DejaVu Sans Condensed','DejaVu Sans','Liberation Sans',sans-serif;color:#202020;transform-origin:0 50%;transform:scaleX(1.0202);">Ligne: 4</span>
<div style="left:60.2px;top:563px;width:75.4px;height:10.4px;background:#fff;"></div>
<div style="left:127.80000000000001px;top:563.5px;width:7.6000000000000005px;height:9.4px;background:#d9d8d4;"></div>
<svg style="left:129.20000000000005px;top:567.0px;" width="4" height="2.6" viewBox="0 0 4 2.6"><path d="M0 0 H4 L2 2.4Z" fill="#000"/></svg>
<div style="left:127.4px;top:563.6px;width:7.8px;height:9.2px;background:#d4d0c8;border:0.7px solid #f4f4f0;border-right-color:#505050;border-bottom-color:#505050;"></div>
<svg style="left:129.4px;top:567px;" width="4" height="2.6" viewBox="0 0 4 2.6"><path d="M0 0 H4 L2 2.4Z" fill="#000"/></svg>
<div style="left:159px;top:563.4px;width:20px;height:11.6px;border:0.7px solid #a9c3e6;background:#c3d9f5;"></div>
<svg style="left:0;top:0" width="1024" height="576" viewBox="0 0 1024 576"><rect x="168.0" y="188.4" width="656.6" height="388.4" fill="#d4d0c8"/><path d="M168.65 576.8 V189.05 H824.6" stroke="#dedbd5" stroke-width="1.3" fill="none"/><path d="M169.95 576.8 V190.35 H823.3000000000001" stroke="#ffffff" stroke-width="1.3" fill="none"/><path d="M822.65 189.70000000000002 V574.8499999999999 H169.3" stroke="#808080" stroke-width="1.3" fill="none"/><path d="M823.95 188.4 V576.15 H168.0" stroke="#404040" stroke-width="1.3" fill="none"/><rect x="170.6" y="191" width="651.4" height="9.3" fill="#0a246a"/></svg>
<svg style="left:171px;top:191.4px;" width="7.6" height="8.4" viewBox="0 0 7.6 8.4"><rect x="0" y="0" width="7.6" height="8.4" fill="#fff"/><rect x="0.4" y="0.4" width="3.2" height="3.6" fill="#3f6fd8"/><rect x="4" y="0.4" width="3.2" height="3.6" fill="#7fd0f0"/><rect x="0.4" y="4.4" width="3.2" height="3.6" fill="#8fe0d0"/><rect x="4" y="4.4" width="3.2" height="3.6" fill="#c8d8f8"/></svg>
<span class="t" style="left:179.60px;top:192.00px;font:bold 6.9px/9.66px 'DejaVu Sans Condensed','DejaVu Sans','Liberation Sans',sans-serif;color:#fff;transform-origin:0 50%;transform:scaleX(0.8607);">Représentation graphique</span>
<div style="left:813.4px;top:192.2px;width:8.2px;height:7px;background:#d4d0c8;border:0.6px solid #fff;border-right-color:#404040;border-bottom-color:#404040;"></div>
<svg style="left:815px;top:193.5px;" width="5" height="4.4" viewBox="0 0 5 4.4"><path d="M0.5 0.4 L4.4 4 M4.4 0.4 L0.5 4" stroke="#000" stroke-width="1.1" fill="none"/></svg>
<div style="left:171.6px;top:202.8px;width:44.2px;height:9.4px;background:#d9d6cf;border-top:0.7px solid #fff;border-left:0.7px solid #fff;border-right:0.9px solid #b8b6b0;border-radius:1.5px 1.5px 0 0;"></div>
<svg style="left:174px;top:203.2px;" width="8" height="8.4" viewBox="0 0 8 8.4"><circle cx="4" cy="4" r="3.7" fill="#f4f4f0" stroke="#c8c8c0" stroke-width="0.5"/><path d="M1 5.2 Q4 9 7 5.2" stroke="#5a86d8" stroke-width="1.1" fill="none"/><rect x="3.6" y="1.6" width="0.9" height="3.4" fill="#e8a030"/></svg>
<span class="t" style="left:185.00px;top:203.00px;font:6.6px/9.24px 'Liberation Sans',sans-serif;color:#111;transform-origin:0 50%;transform:scaleX(0.8864);">Indicateurs</span>
<div style="left:217px;top:201.6px;width:85px;height:10.8px;background:#d4d0c8;border-top:0.7px solid #fff;border-left:0.7px solid #fff;border-right:1.4px solid #686868;border-bottom:1px solid #b0aea8;"></div>
<svg style="left:220.4px;top:203.6px;" width="9" height="6.6" viewBox="0 0 9 6.6"><rect x="0.3" y="0.3" width="8.4" height="6" fill="#dce8f8" stroke="#4f6fa8" stroke-width="0.6"/><rect x="1.4" y="3" width="1.6" height="2.6" fill="#e05a3a"/><rect x="3.6" y="1.6" width="1.6" height="4" fill="#3fa84a"/><rect x="5.8" y="2.4" width="1.6" height="3.2" fill="#3f6fd8"/></svg>
<span class="t" style="left:231.50px;top:202.00px;font:6.6px/9.24px 'Liberation Sans',sans-serif;color:#111;transform-origin:0 50%;transform:scaleX(0.8763);">Représentation graphique</span>
<div style="left:170.6px;top:212.2px;width:651.4px;height:0.9px;background:#eceae6;"></div>
<div style="left:176.4px;top:218.4px;width:55.8px;height:16.6px;background:#e6e4df;border:1px solid #fbfbfa;border-top-color:#a8a6a0;border-left-color:#a8a6a0;"></div>
<svg style="left:186.6px;top:222.2px;" width="9" height="9.4" viewBox="0 0 9 9.4"><circle cx="4.4" cy="4.8" r="3.8" fill="#8a8adf"/><path d="M4.4 4.8 L4.4 1 A3.8 3.8 0 0 0 0.7 4 Z" fill="#f4e87a"/><path d="M4.4 4.8 L7.6 2.6 A3.8 3.8 0 0 0 4.4 1Z" fill="#7a1a2a"/><path d="M1 6.4 Q4.4 10 7.8 6.4 Q4.4 8.4 1 6.4Z" fill="#5a5ab0"/></svg>
<span class="t" style="left:200.00px;top:223.00px;font:6.6px/9.24px 'Liberation Sans',sans-serif;color:#111;transform-origin:0 50%;transform:scaleX(0.8713);">Par poste</span>
<svg style="left:240.4px;top:222.2px;" width="9" height="9.4" viewBox="0 0 9 9.4"><circle cx="4.4" cy="4.8" r="3.8" fill="#8a8adf"/><path d="M4.4 4.8 L4.4 1 A3.8 3.8 0 0 0 0.7 4 Z" fill="#f4e87a"/><path d="M4.4 4.8 L7.6 2.6 A3.8 3.8 0 0 0 4.4 1Z" fill="#7a1a2a"/><path d="M1 6.4 Q4.4 10 7.8 6.4 Q4.4 8.4 1 6.4Z" fill="#5a5ab0"/></svg>
<span class="t" style="left:253.40px;top:223.00px;font:6.6px/9.24px 'Liberation Sans',sans-serif;color:#111;transform-origin:0 50%;transform:scaleX(0.8755);">Dépenses / Recettes</span>
<span class="t" style="left:366.80px;top:241.00px;font:bold 7.4px/10.36px 'Liberation Sans',sans-serif;color:#111;transform-origin:0 50%;transform:scaleX(0.9574);">Représentation graphique par poste</span>
<svg style="left:0;top:0" width="1024" height="576" viewBox="0 0 1024 576"><rect x="257.6" y="253.0" width="408.0" height="179.60000000000002" fill="#d4d0c8" stroke="#686868" stroke-width="1.1"/><path d="M311.10 253.0 V432.6" stroke="#8e8e8e" stroke-width="0.75" stroke-dasharray="1.2 1.5" fill="none"/><path d="M311.10 432.6 l-5.0 5.0" stroke="#b8b870" stroke-width="0.6"/><path d="M364.60 253.0 V432.6" stroke="#8e8e8e" stroke-width="0.75" stroke-dasharray="1.2 1.5" fill="none"/><path d="M364.60 432.6 l-5.0 5.0" stroke="#b8b870" stroke-width="0.6"/><path d="M418.10 253.0 V432.6" stroke="#8e8e8e" stroke-width="0.75" stroke-dasharray="1.2 1.5" fill="none"/><path d="M418.10 432.6 l-5.0 5.0" stroke="#b8b870" stroke-width="0.6"/><path d="M471.60 253.0 V432.6" stroke="#8e8e8e" stroke-width="0.75" stroke-dasharray="1.2 1.5" fill="none"/><path d="M471.60 432.6 l-5.0 5.0" stroke="#b8b870" stroke-width="0.6"/><path d="M525.10 253.0 V432.6" stroke="#8e8e8e" stroke-width="0.75" stroke-dasharray="1.2 1.5" fill="none"/><path d="M525.10 432.6 l-5.0 5.0" stroke="#b8b870" stroke-width="0.6"/><path d="M578.60 253.0 V432.6" stroke="#8e8e8e" stroke-width="0.75" stroke-dasharray="1.2 1.5" fill="none"/><path d="M578.60 432.6 l-5.0 5.0" stroke="#b8b870" stroke-width="0.6"/><path d="M632.10 253.0 V432.6" stroke="#8e8e8e" stroke-width="0.75" stroke-dasharray="1.2 1.5" fill="none"/><path d="M632.10 432.6 l-5.0 5.0" stroke="#b8b870" stroke-width="0.6"/><path d="M257.6 269.50 H665.6" stroke="#8e8e8e" stroke-width="0.75" stroke-dasharray="1.2 1.5" fill="none"/><path d="M257.6 294.00 H665.6" stroke="#8e8e8e" stroke-width="0.75" stroke-dasharray="1.2 1.5" fill="none"/><path d="M257.6 318.50 H665.6" stroke="#8e8e8e" stroke-width="0.75" stroke-dasharray="1.2 1.5" fill="none"/><path d="M257.6 343.00 H665.6" stroke="#8e8e8e" stroke-width="0.75" stroke-dasharray="1.2 1.5" fill="none"/><path d="M257.6 367.50 H665.6" stroke="#8e8e8e" stroke-width="0.75" stroke-dasharray="1.2 1.5" fill="none"/><path d="M257.6 392.00 H665.6" stroke="#8e8e8e" stroke-width="0.75" stroke-dasharray="1.2 1.5" fill="none"/><path d="M257.6 416.50 H665.6" stroke="#8e8e8e" stroke-width="0.75" stroke-dasharray="1.2 1.5" fill="none"/><path d="M252.6 437.6 L257.6 432.6 L665.6 432.6 L660.6 437.6Z" fill="#ffff99" stroke="#3a3a2a" stroke-width="0.7"/><path d="M252.6 258.00 L257.6 253.00 L257.6 432.60 L252.6 437.60Z" fill="#ffff99" stroke="#2a2a1a" stroke-width="0.6"/><path d="M252.6 274.40 L257.6 269.40 L257.6 277.00 L252.6 282.00Z" fill="#800000" stroke="none" stroke-width="0.6"/><path d="M252.6 265.8 L257.6 261.2 L577.69 261.2 L572.69 265.8Z" fill="#0000b8" stroke="#000084" stroke-width="0.4"/><path d="M572.69 265.8 L577.69 261.2 L577.69 269.8 L572.69 274.40000000000003Z" fill="#000084"/><rect x="252.6" y="265.8" width="320.09" height="8.6" fill="#0000ff"/><path d="M577.69 268.40000000000003 H585.8" stroke="#8e4e4a" stroke-width="0.9"/><rect x="587.1999999999999" y="265.6" width="36.200000000000045" height="8.6" fill="#5c5c56"/><rect x="585.8" y="264.2" width="36.200000000000045" height="8.6" rx="0.7" fill="#ffffe6" stroke="#2a2a2a" stroke-width="0.7"/><path d="M250.0 274.5 H252.6" stroke="#8a8a86" stroke-width="0.7"/><path d="M252.6 298.90 L257.6 293.90 L257.6 301.50 L252.6 306.50Z" fill="#800000" stroke="none" stroke-width="0.6"/><path d="M252.6 290.30 L257.6 285.30 L257.6 293.90 L252.6 298.90Z" fill="#000000" stroke="none" stroke-width="0.6"/><path d="M257.60 292.90000000000003 H265.6" stroke="#8e4e4a" stroke-width="0.9"/><rect x="267.0" y="290.1" width="13.599999999999966" height="8.6" fill="#5c5c56"/><rect x="265.6" y="288.7" width="13.599999999999966" height="8.6" rx="0.7" fill="#ffffe6" stroke="#2a2a2a" stroke-width="0.7"/><path d="M250.0 299.0 H252.6" stroke="#8a8a86" stroke-width="0.7"/><path d="M252.6 323.40 L257.6 318.40 L257.6 326.00 L252.6 331.00Z" fill="#800000" stroke="none" stroke-width="0.6"/><path d="M252.6 314.8 L257.6 310.2 L264.41 310.2 L259.41 314.8Z" fill="#0000b8" stroke="#000084" stroke-width="0.4"/><path d="M259.41 314.8 L264.41 310.2 L264.41 318.8 L259.41 323.40000000000003Z" fill="#000084"/><rect x="252.6" y="314.8" width="6.81" height="8.6" fill="#0000ff"/><path d="M264.41 317.40000000000003 H272.6" stroke="#8e4e4a" stroke-width="0.9"/><rect x="274.0" y="314.6" width="27.399999999999977" height="8.6" fill="#5c5c56"/><rect x="272.6" y="313.2" width="27.399999999999977" height="8.6" rx="0.7" fill="#ffffe6" stroke="#2a2a2a" stroke-width="0.7"/><path d="M250.0 323.5 H252.6" stroke="#8a8a86" stroke-width="0.7"/><path d="M252.6 347.90 L257.6 342.90 L257.6 350.50 L252.6 355.50Z" fill="#800000" stroke="none" stroke-width="0.6"/><path d="M252.6 339.3 L257.6 334.7 L424.76 334.7 L419.76 339.3Z" fill="#0000b8" stroke="#000084" stroke-width="0.4"/><path d="M419.76 339.3 L424.76 334.7 L424.76 343.3 L419.76 347.90000000000003Z" fill="#000084"/><rect x="252.6" y="339.3" width="167.16" height="8.6" fill="#0000ff"/><path d="M424.76 341.90000000000003 H432.6" stroke="#8e4e4a" stroke-width="0.9"/><rect x="434.0" y="339.1" width="32.0" height="8.6" fill="#5c5c56"/><rect x="432.6" y="337.7" width="32.0" height="8.6" rx="0.7" fill="#ffffe6" stroke="#2a2a2a" stroke-width="0.7"/><path d="M250.0 348.0 H252.6" stroke="#8a8a86" stroke-width="0.7"/><path d="M252.6 372.40 L257.6 367.40 L257.6 375.00 L252.6 380.00Z" fill="#800000" stroke="none" stroke-width="0.6"/><path d="M252.6 363.8 L257.6 359.2 L261.13 359.2 L256.13 363.8Z" fill="#0000b8" stroke="#000084" stroke-width="0.4"/><path d="M256.13 363.8 L261.13 359.2 L261.13 367.8 L256.13 372.40000000000003Z" fill="#000084"/><rect x="252.6" y="363.8" width="3.53" height="8.6" fill="#0000ff"/><path d="M261.13 366.40000000000003 H269.2" stroke="#8e4e4a" stroke-width="0.9"/><rect x="270.59999999999997" y="363.6" width="27.600000000000023" height="8.6" fill="#5c5c56"/><rect x="269.2" y="362.2" width="27.600000000000023" height="8.6" rx="0.7" fill="#ffffe6" stroke="#2a2a2a" stroke-width="0.7"/><path d="M250.0 372.5 H252.6" stroke="#8a8a86" stroke-width="0.7"/><path d="M252.6 396.90 L257.6 391.90 L257.6 399.50 L252.6 404.50Z" fill="#800000" stroke="none" stroke-width="0.6"/><path d="M252.6 388.3 L257.6 383.7 L400.19 383.7 L395.19 388.3Z" fill="#0000b8" stroke="#000084" stroke-width="0.4"/><path d="M395.19 388.3 L400.19 383.7 L400.19 392.3 L395.19 396.90000000000003Z" fill="#000084"/><rect x="252.6" y="388.3" width="142.59" height="8.6" fill="#0000ff"/><path d="M400.19 390.90000000000003 H408.8" stroke="#8e4e4a" stroke-width="0.9"/><rect x="410.2" y="388.1" width="32.39999999999998" height="8.6" fill="#5c5c56"/><rect x="408.8" y="386.7" width="32.39999999999998" height="8.6" rx="0.7" fill="#ffffe6" stroke="#2a2a2a" stroke-width="0.7"/><path d="M250.0 397.0 H252.6" stroke="#8a8a86" stroke-width="0.7"/><path d="M252.6 421.40 L257.6 416.40 L257.6 424.00 L252.6 429.00Z" fill="#800000" stroke="none" stroke-width="0.6"/><path d="M252.6 412.8 L257.6 408.2 L614.27 408.2 L609.27 412.8Z" fill="#004800" stroke="#001c00" stroke-width="0.4"/><path d="M609.27 412.8 L614.27 408.2 L614.27 416.8 L609.27 421.40000000000003Z" fill="#001c00"/><rect x="252.6" y="412.8" width="356.67" height="8.6" fill="#008000"/><path d="M614.27 415.40000000000003 H622.6" stroke="#8e4e4a" stroke-width="0.9"/><rect x="624.0" y="412.6" width="44.39999999999998" height="8.6" fill="#5c5c56"/><rect x="622.6" y="411.2" width="44.39999999999998" height="8.6" rx="0.7" fill="#ffffe6" stroke="#2a2a2a" stroke-width="0.7"/><path d="M250.0 421.5 H252.6" stroke="#8a8a86" stroke-width="0.7"/><path d="M252.6 258.0 V437.6 H660.6" stroke="#1a1a1a" stroke-width="0.9" fill="none"/><path d="M252.60 437.6 v2.6" stroke="#555" stroke-width="0.7"/><path d="M265.98 437.6 v1.4" stroke="#777" stroke-width="0.5"/><path d="M279.35 437.6 v1.4" stroke="#777" stroke-width="0.5"/><path d="M292.73 437.6 v1.4" stroke="#777" stroke-width="0.5"/><path d="M306.10 437.6 v2.6" stroke="#555" stroke-width="0.7"/><path d="M319.48 437.6 v1.4" stroke="#777" stroke-width="0.5"/><path d="M332.85 437.6 v1.4" stroke="#777" stroke-width="0.5"/><path d="M346.23 437.6 v1.4" stroke="#777" stroke-width="0.5"/><path d="M359.60 437.6 v2.6" stroke="#555" stroke-width="0.7"/><path d="M372.98 437.6 v1.4" stroke="#777" stroke-width="0.5"/><path d="M386.35 437.6 v1.4" stroke="#777" stroke-width="0.5"/><path d="M399.73 437.6 v1.4" stroke="#777" stroke-width="0.5"/><path d="M413.10 437.6 v2.6" stroke="#555" stroke-width="0.7"/><path d="M426.48 437.6 v1.4" stroke="#777" stroke-width="0.5"/><path d="M439.85 437.6 v1.4" stroke="#777" stroke-width="0.5"/><path d="M453.23 437.6 v1.4" stroke="#777" stroke-width="0.5"/><path d="M466.60 437.6 v2.6" stroke="#555" stroke-width="0.7"/><path d="M479.98 437.6 v1.4" stroke="#777" stroke-width="0.5"/><path d="M493.35 437.6 v1.4" stroke="#777" stroke-width="0.5"/><path d="M506.73 437.6 v1.4" stroke="#777" stroke-width="0.5"/><path d="M520.10 437.6 v2.6" stroke="#555" stroke-width="0.7"/><path d="M533.48 437.6 v1.4" stroke="#777" stroke-width="0.5"/><path d="M546.85 437.6 v1.4" stroke="#777" stroke-width="0.5"/><path d="M560.23 437.6 v1.4" stroke="#777" stroke-width="0.5"/><path d="M573.60 437.6 v2.6" stroke="#555" stroke-width="0.7"/><path d="M586.98 437.6 v1.4" stroke="#777" stroke-width="0.5"/><path d="M600.35 437.6 v1.4" stroke="#777" stroke-width="0.5"/><path d="M613.73 437.6 v1.4" stroke="#777" stroke-width="0.5"/><path d="M627.10 437.6 v2.6" stroke="#555" stroke-width="0.7"/><path d="M640.48 437.6 v1.4" stroke="#777" stroke-width="0.5"/><path d="M653.85 437.6 v1.4" stroke="#777" stroke-width="0.5"/></svg>
<span class="t" style="left:200.90px;top:270.00px;font:6.5px/9.1px 'Liberation Sans',sans-serif;color:#111;transform-origin:0 50%;transform:scaleX(0.8251);">TOTAL DEPENSES</span>
<span class="t" style="left:588.50px;top:264.00px;font:6.6px/9.24px 'Liberation Sans',sans-serif;color:#111;transform-origin:0 50%;transform:scaleX(0.8839);">1 196 597 €</span>
<span class="t" style="left:190.70px;top:295.00px;font:6.5px/9.1px 'Liberation Sans',sans-serif;color:#111;transform-origin:0 50%;transform:scaleX(0.8991);">Sous total commercial</span>
<span class="t" style="left:268.30px;top:289.00px;font:6.6px/9.24px 'Liberation Sans',sans-serif;color:#111;transform-origin:0 50%;transform:scaleX(0.8940);">0 €</span>
<span class="t" style="left:202.20px;top:319.00px;font:6.5px/9.1px 'Liberation Sans',sans-serif;color:#111;transform-origin:0 50%;transform:scaleX(0.8900);">Sous total gestion</span>
<span class="t" style="left:275.30px;top:313.00px;font:6.6px/9.24px 'Liberation Sans',sans-serif;color:#111;transform-origin:0 50%;transform:scaleX(0.8570);">25 450 €</span>
<span class="t" style="left:192.00px;top:343.00px;font:6.5px/9.1px 'Liberation Sans',sans-serif;color:#111;transform-origin:0 50%;transform:scaleX(0.8990);">Sous total contruction</span>
<span class="t" style="left:435.30px;top:338.00px;font:6.6px/9.24px 'Liberation Sans',sans-serif;color:#111;transform-origin:0 50%;transform:scaleX(0.9065);">624 900 €</span>
<span class="t" style="left:209.40px;top:368.00px;font:6.5px/9.1px 'Liberation Sans',sans-serif;color:#111;transform-origin:0 50%;transform:scaleX(0.8731);">Sous total VRD</span>
<span class="t" style="left:271.90px;top:362.00px;font:6.6px/9.24px 'Liberation Sans',sans-serif;color:#111;transform-origin:0 50%;transform:scaleX(0.8648);">13 200 €</span>
<span class="t" style="left:202.80px;top:392.00px;font:6.5px/9.1px 'Liberation Sans',sans-serif;color:#111;transform-origin:0 50%;transform:scaleX(0.9038);">Sous total foncier</span>
<span class="t" style="left:411.50px;top:387.00px;font:6.6px/9.24px 'Liberation Sans',sans-serif;color:#111;transform-origin:0 50%;transform:scaleX(0.9201);">533 047 €</span>
<span class="t" style="left:201.60px;top:416.00px;font:6.5px/9.1px 'Liberation Sans',sans-serif;color:#111;transform-origin:0 50%;transform:scaleX(0.8234);">TOTAL RECETTES</span>
<span class="t" style="left:625.30px;top:411.00px;font:6.6px/9.24px 'Liberation Sans',sans-serif;color:#111;transform-origin:0 50%;transform:scaleX(0.8864);">1 333 333,36 €</span>
<span class="t" style="left:250.40px;top:442.00px;font:6.4px/8.96px 'Liberation Sans',sans-serif;color:#111;transform-origin:0 50%;transform:scaleX(1.0105);">0</span>
<span class="t" style="left:295.00px;top:442.00px;font:6.4px/8.96px 'Liberation Sans',sans-serif;color:#111;transform-origin:0 50%;transform:scaleX(0.9260);">200 000</span>
<span class="t" style="left:348.50px;top:442.00px;font:6.4px/8.96px 'Liberation Sans',sans-serif;color:#111;transform-origin:0 50%;transform:scaleX(0.9260);">400 000</span>
<span class="t" style="left:402.00px;top:442.00px;font:6.4px/8.96px 'Liberation Sans',sans-serif;color:#111;transform-origin:0 50%;transform:scaleX(0.9260);">600 000</span>
<span class="t" style="left:455.50px;top:442.00px;font:6.4px/8.96px 'Liberation Sans',sans-serif;color:#111;transform-origin:0 50%;transform:scaleX(0.9260);">800 000</span>
<span class="t" style="left:506.40px;top:442.00px;font:6.4px/8.96px 'Liberation Sans',sans-serif;color:#111;transform-origin:0 50%;transform:scaleX(0.9354);">1 000 000</span>
<span class="t" style="left:559.90px;top:442.00px;font:6.4px/8.96px 'Liberation Sans',sans-serif;color:#111;transform-origin:0 50%;transform:scaleX(0.9354);">1 200 000</span>
<span class="t" style="left:613.40px;top:442.00px;font:6.4px/8.96px 'Liberation Sans',sans-serif;color:#111;transform-origin:0 50%;transform:scaleX(0.9354);">1 400 000</span>
</div>
</body></html>
